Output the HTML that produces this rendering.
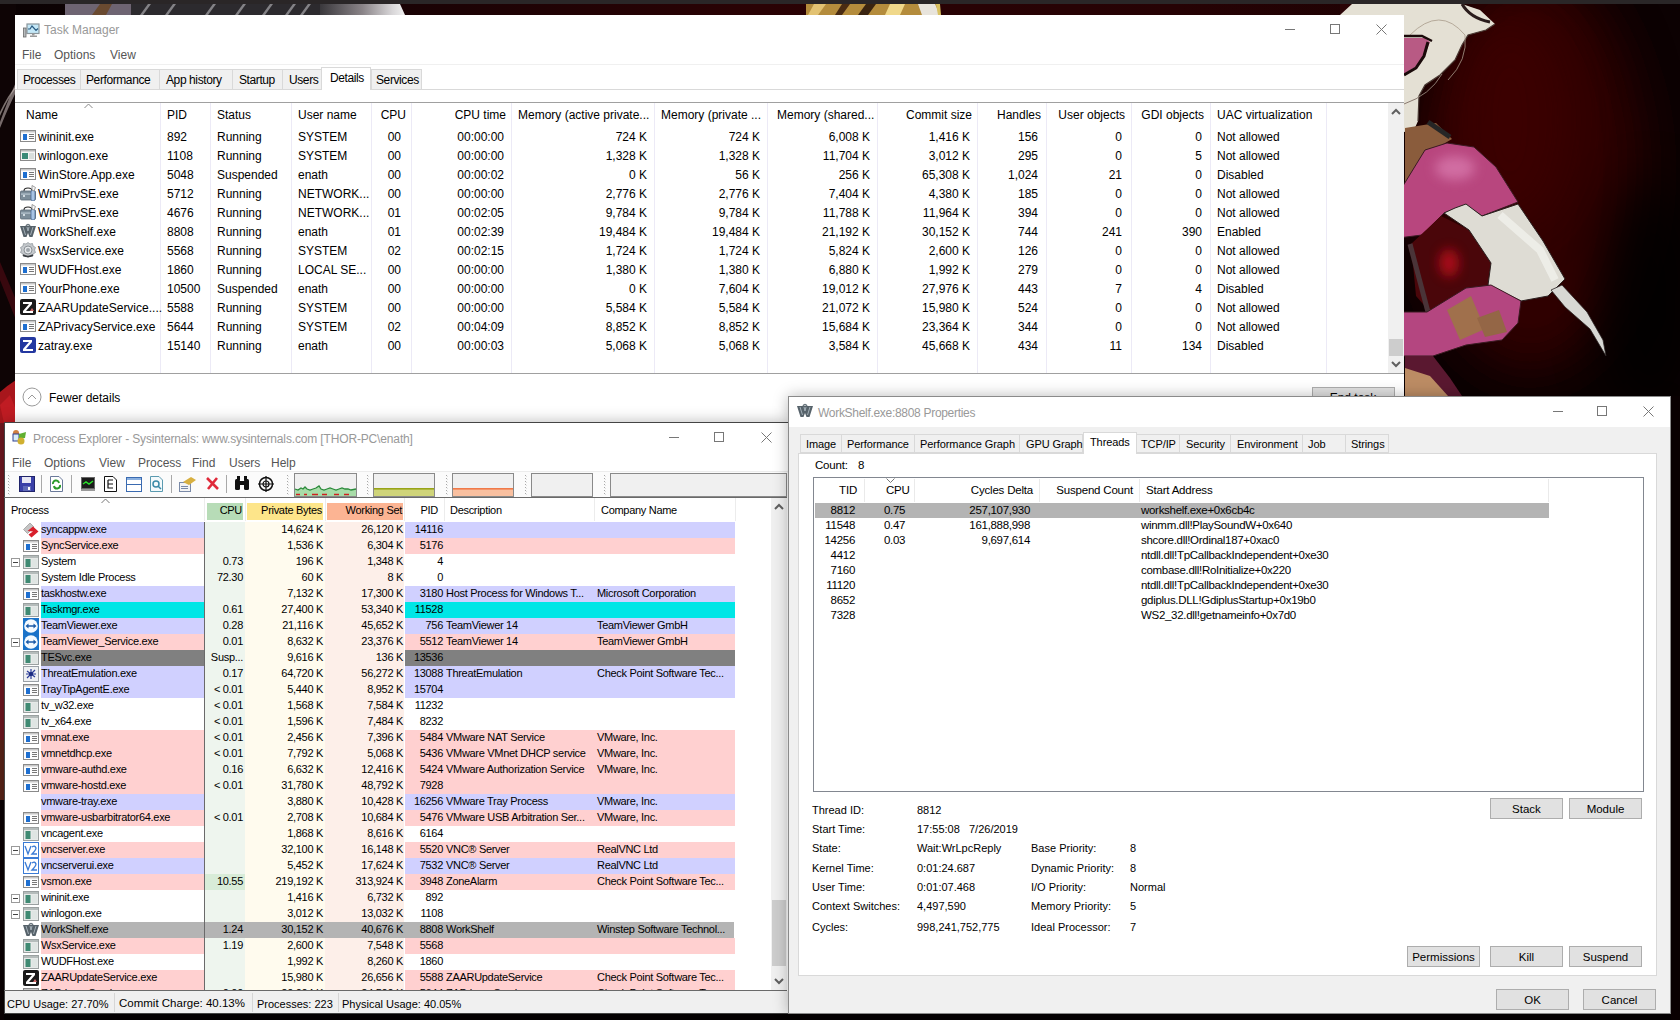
<!DOCTYPE html>
<html><head><meta charset="utf-8"><style>
html,body{margin:0;padding:0;}
body{width:1680px;height:1020px;overflow:hidden;position:relative;background:#080103;font-family:"Liberation Sans", sans-serif;}
.t{position:absolute;white-space:pre;line-height:1;font-family:"Liberation Sans", sans-serif;}
.r{position:absolute;}
</style></head><body>
<svg class="r" style="left:0px;top:0px;" width="1680" height="1020" viewBox="0 0 1680 1020"><defs><radialGradient id="rg1" cx="1500" cy="230" r="260" gradientUnits="userSpaceOnUse"><stop offset="0" stop-color="#3a0608"/><stop offset="0.6" stop-color="#1e0204"/><stop offset="1" stop-color="#0a0001"/></radialGradient><linearGradient id="lg_top" x1="0" y1="0" x2="1680" y2="0" gradientUnits="userSpaceOnUse"><stop offset="0" stop-color="#0a0203"/><stop offset="0.25" stop-color="#1a0204"/><stop offset="0.45" stop-color="#2a0204"/><stop offset="0.7" stop-color="#260204"/><stop offset="1" stop-color="#140102"/></linearGradient><linearGradient id="lg_left" x1="0" y1="0" x2="0" y2="1020" gradientUnits="userSpaceOnUse"><stop offset="0" stop-color="#0a0203"/><stop offset="0.3" stop-color="#0c0304"/><stop offset="0.33" stop-color="#1a0a0c"/><stop offset="0.35" stop-color="#0c0304"/><stop offset="0.62" stop-color="#1a0406"/><stop offset="0.66" stop-color="#3a0a0c"/><stop offset="0.72" stop-color="#7a1418"/><stop offset="0.8" stop-color="#400808"/><stop offset="1" stop-color="#100203"/></linearGradient><linearGradient id="lg_blade" x1="0" y1="0" x2="1" y2="1"><stop offset="0" stop-color="#f2f2f0"/><stop offset="1" stop-color="#9a9a98"/></linearGradient><filter id="blur20" x="-50%" y="-50%" width="200%" height="200%"><feGaussianBlur stdDeviation="25"/></filter><filter id="blur6" x="-50%" y="-50%" width="200%" height="200%"><feGaussianBlur stdDeviation="6"/></filter></defs><rect x="0" y="0" width="1680" height="1020" fill="#080103"/><rect x="0" y="0" width="1680" height="15" fill="url(#lg_top)"/><rect x="0" y="0" width="16" height="1020" fill="#0e0405"/><path d="M0 122 Q8 100 16 82 L16 92 Q8 108 0 128 Z" fill="#9a8c8c" opacity="0.75"/><path d="M0 112 Q8 95 16 86 L16 88 Q8 98 0 116 Z" fill="#c8bcb8" opacity="0.6"/><path d="M0 262 L16 300 L16 320 L0 280 Z" fill="#4a0a12" opacity="0.7"/><path d="M0 392 Q8 385 16 380 L16 423 L0 423 Z" fill="#a8161c"/><path d="M0 405 L10 395 L16 410 L16 423 L4 423 Z" fill="#d02228" opacity="0.6"/><defs><linearGradient id="silv" x1="0" y1="0" x2="1" y2="0"><stop offset="0" stop-color="#3a383c"/><stop offset="0.5" stop-color="#8a8488"/><stop offset="0.85" stop-color="#d8d6d8"/><stop offset="1" stop-color="#f0f0f0"/></linearGradient></defs><rect x="65" y="4" width="66" height="11" fill="#6e6472"/><path d="M92 15 L100 4 L112 4 L106 15 Z" fill="#6a4a30"/><rect x="131" y="4" width="190" height="11" fill="#2c2a2e"/><path d="M140 15 L148 4 L151 4 L143 15 Z" fill="#9a989c" opacity="0.8"/><path d="M165 15 L173 4 L176 4 L168 15 Z" fill="#9a989c" opacity="0.8"/><path d="M205 15 L213 4 L216 4 L208 15 Z" fill="#9a989c" opacity="0.8"/><path d="M235 15 L243 4 L246 4 L238 15 Z" fill="#9a989c" opacity="0.8"/><path d="M262 15 L270 4 L273 4 L265 15 Z" fill="#9a989c" opacity="0.8"/><path d="M285 15 L293 4 L296 4 L288 15 Z" fill="#9a989c" opacity="0.8"/><path d="M300 15 L308 4 L311 4 L303 15 Z" fill="#9a989c" opacity="0.8"/><path d="M320 4 L400 4 L405 15 L320 15 Z" fill="url(#silv)"/><rect x="806" y="4" width="134" height="11" fill="#b48c3c"/><path d="M808 15 L814 4 L826 4 L818 15 Z" fill="#e2c272"/><path d="M835 15 L842 4 L850 4 L842 15 Z" fill="#4a2c12"/><path d="M858 15 L866 4 L876 4 L868 15 Z" fill="#3a2410"/><path d="M885 15 L890 4 L905 4 L900 15 Z" fill="#f0d88a"/><path d="M918 4 L935 4 L940 15 L922 15 Z" fill="#e8e4dc"/><path d="M936 4 L940 4 L941 15 L938 15 Z" fill="#d8c060"/><rect x="1404" y="4" width="276" height="1016" fill="#0c0102"/><ellipse cx="1530" cy="170" rx="110" ry="200" fill="#320405" opacity="0.95" filter="url(#blur20)"/><ellipse cx="1510" cy="120" rx="60" ry="110" fill="#420506" opacity="0.6" filter="url(#blur20)"/><ellipse cx="1650" cy="300" rx="50" ry="120" fill="#050001" opacity="0.8" filter="url(#blur20)"/><rect x="1340" y="4" width="64" height="11" fill="#2a0406"/><path d="M1340 15 L1352 4 L1462 4 L1480 10 L1495 24 L1486 30 L1468 35 L1462 45 L1455 60 L1440 75 L1425 85 L1419 96 L1418 121 L1414 130 L1404 132 L1404 15 Z" fill="#e4e0d4"/><path d="M1462 4 Q1470 18 1490 22" stroke="#2a1c1c" stroke-width="3" fill="none"/><path d="M1495 24 L1486 30 L1468 35 L1462 45 L1455 60 L1440 75 L1425 85 L1419 96 L1418 121" stroke="#4a3a34" stroke-width="1.2" fill="none"/><path d="M1404 104 Q1430 95 1442 74" stroke="#8a7a70" stroke-width="1" fill="none"/><path d="M1410 35 Q1440 5 1465 35 Q1468 60 1448 80" stroke="#a89a8a" stroke-width="0.8" fill="none"/><path d="M1404 38 L1425 38 L1430 42 L1426 52 L1420 64 L1404 74 Z" fill="#b85a84"/><path d="M1404 36 L1422 36 L1432 41" stroke="#1a0a0a" stroke-width="2.5" fill="none"/><path d="M1428 42 L1424 56 L1416 68 L1404 75" stroke="#1a0a0a" stroke-width="3" fill="none"/><path d="M1405 128 L1436 123 L1452 139 L1433 150 L1416 172 L1405 191 Z" fill="#8a5c3c"/><path d="M1428 122 L1450 137" stroke="#262626" stroke-width="5"/><path d="M1398 194 L1425 150 L1447 143 L1474 147 L1496 167 L1518 202 L1482 216 L1466 205 L1444 213 L1422 235 L1398 238 Z" fill="#b8467e" stroke="#3a1a22" stroke-width="1"/><ellipse cx="1455" cy="168" rx="20" ry="12" fill="#d878ac" opacity="0.8" filter="url(#blur6)"/><path d="M1411 244 L1441 216 L1469 230 L1491 263 L1488 285 L1466 290 L1430 312 L1416 296 Z" fill="#4a060a"/><ellipse cx="1449" cy="263" rx="10" ry="14" fill="#c0101a" opacity="0.8" filter="url(#blur6)"/><path d="M1410 244 L1428 312" stroke="#4a3438" stroke-width="5"/><path d="M1455 208 L1466 204 L1482 216 L1518 204 L1543 241 L1565 279 L1548 296 L1521 301 L1488 285 L1491 263 L1469 230 L1444 213 Z" fill="#dedcd4" stroke="#2a2020" stroke-width="1"/><path d="M1500 215 L1540 250 L1555 280" stroke="#f4f4f0" stroke-width="8" fill="none" opacity="0.7"/><path d="M1398 312 L1427 312 L1466 288 L1491 285 L1521 301 L1518 323 L1502 340 L1466 345 L1433 356 L1398 356 Z" fill="#b44680" stroke="#3a1a22" stroke-width="1"/><path d="M1447 310 L1471 296 L1485 329 L1460 340 Z" fill="#a0704c"/><path d="M1477 318 L1499 310 L1507 332 L1485 337 Z" fill="#946646"/><path d="M1551 290 L1562 285 L1587 312 L1603 340 L1606 356 L1590 329 L1565 307 Z" fill="#d8d8d4" stroke="#2a2222" stroke-width="0.8"/><path d="M1405 356 L1433 356 L1450 378 L1462 396 L1405 396 Z" fill="#5a1830"/><path d="M1405 368 L1430 376 L1448 396 L1405 396 Z" fill="#bc8c64"/><rect x="0" y="0" width="1680" height="4" fill="#2a2627"/><rect x="0" y="1014" width="1680" height="6" fill="#050102"/><rect x="1671" y="396" width="9" height="624" fill="#0a0102"/><rect x="0" y="423" width="4" height="597" fill="#0a0203"/><rect x="0" y="423" width="4" height="320" fill="#701820"/><rect x="0" y="740" width="4" height="60" fill="#5a2418"/></svg><div class="r" style="left:15px;top:15px;width:1389px;height:408px;background:#fff;"></div><svg class="r" style="left:22px;top:22px;" width="18" height="16" viewBox="0 0 18 16"><rect x="5" y="2" width="12" height="9.5" fill="#c4e8f8" stroke="#8a969c" stroke-width="1.2"/><path d="M6 7 L8 7 L10 4 L14 8.5 L16 6.5" stroke="#2a5a80" stroke-width="1.2" fill="none"/><rect x="10" y="11.5" width="2.5" height="2" fill="#9a9a9a"/><rect x="8" y="13.5" width="7" height="1.5" fill="#9a9a9a"/><rect x="1.5" y="6" width="2.5" height="9" fill="#b8bcbe" stroke="#6a6a6a" stroke-width="0.8"/></svg><div class="t" style="left:44px;top:24px;font-size:12px;color:#999;">Task Manager</div><div class="r" style="left:1285px;top:29px;width:10px;height:1px;background:#777;"></div><div class="r" style="left:1330px;top:24px;width:10px;height:10px;border:1px solid #777;box-sizing:border-box;"></div><svg class="r" style="left:1376px;top:24px;" width="11" height="11" viewBox="0 0 11 11"><path d="M0.5 0.5 L10.5 10.5 M10.5 0.5 L0.5 10.5" stroke="#777" stroke-width="1"/></svg><div class="t" style="left:22px;top:49px;font-size:12px;color:#555;">File</div><div class="t" style="left:54px;top:49px;font-size:12px;color:#555;">Options</div><div class="t" style="left:110px;top:49px;font-size:12px;color:#555;">View</div><div class="r" style="left:15px;top:64px;width:1389px;height:1px;background:#f0f0f0;"></div><div class="r" style="left:15px;top:89px;width:1389px;height:1px;background:#d9d9d9;"></div><div class="r" style="left:17px;top:69px;width:64px;height:21px;background:#f0f0f0;border:1px solid #d9d9d9;box-sizing:border-box;"></div><div class="t" style="left:23px;top:74px;font-size:12px;color:#000;letter-spacing:-0.4px;">Processes</div><div class="r" style="left:80px;top:69px;width:80px;height:21px;background:#f0f0f0;border:1px solid #d9d9d9;box-sizing:border-box;"></div><div class="t" style="left:86px;top:74px;font-size:12px;color:#000;letter-spacing:-0.4px;">Performance</div><div class="r" style="left:159px;top:69px;width:74px;height:21px;background:#f0f0f0;border:1px solid #d9d9d9;box-sizing:border-box;"></div><div class="t" style="left:166px;top:74px;font-size:12px;color:#000;letter-spacing:-0.4px;">App history</div><div class="r" style="left:232px;top:69px;width:51px;height:21px;background:#f0f0f0;border:1px solid #d9d9d9;box-sizing:border-box;"></div><div class="t" style="left:239px;top:74px;font-size:12px;color:#000;letter-spacing:-0.4px;">Startup</div><div class="r" style="left:282px;top:69px;width:40px;height:21px;background:#f0f0f0;border:1px solid #d9d9d9;box-sizing:border-box;"></div><div class="t" style="left:289px;top:74px;font-size:12px;color:#000;letter-spacing:-0.4px;">Users</div><div class="r" style="left:321px;top:67px;width:50px;height:23px;background:#fff;border:1px solid #d9d9d9;box-sizing:border-box;border-bottom:none;"></div><div class="t" style="left:330px;top:72px;font-size:12px;color:#000;letter-spacing:-0.4px;">Details</div><div class="r" style="left:371px;top:69px;width:51px;height:21px;background:#f0f0f0;border:1px solid #d9d9d9;box-sizing:border-box;"></div><div class="t" style="left:376px;top:74px;font-size:12px;color:#000;letter-spacing:-0.4px;">Services</div><div class="r" style="left:15px;top:102px;width:1389px;height:1px;background:#a0a0a0;"></div><div class="r" style="left:160px;top:103px;width:1px;height:271px;background:#eceaf6;"></div><div class="r" style="left:210px;top:103px;width:1px;height:271px;background:#eceaf6;"></div><div class="r" style="left:291px;top:103px;width:1px;height:271px;background:#eceaf6;"></div><div class="r" style="left:371px;top:103px;width:1px;height:271px;background:#eceaf6;"></div><div class="r" style="left:411px;top:103px;width:1px;height:271px;background:#eceaf6;"></div><div class="r" style="left:511px;top:103px;width:1px;height:271px;background:#eceaf6;"></div><div class="r" style="left:654px;top:103px;width:1px;height:271px;background:#eceaf6;"></div><div class="r" style="left:767px;top:103px;width:1px;height:271px;background:#eceaf6;"></div><div class="r" style="left:877px;top:103px;width:1px;height:271px;background:#eceaf6;"></div><div class="r" style="left:977px;top:103px;width:1px;height:271px;background:#eceaf6;"></div><div class="r" style="left:1046px;top:103px;width:1px;height:271px;background:#eceaf6;"></div><div class="r" style="left:1131px;top:103px;width:1px;height:271px;background:#eceaf6;"></div><div class="r" style="left:1210px;top:103px;width:1px;height:271px;background:#eceaf6;"></div><div class="r" style="left:1326px;top:103px;width:1px;height:271px;background:#eceaf6;"></div><svg class="r" style="left:84px;top:103px;" width="9" height="6" viewBox="0 0 9 6"><path d="M0.5 5 L4.5 1 L8.5 5" stroke="#888" fill="none"/></svg><div class="t" style="left:26px;top:109px;font-size:12px;color:#000;">Name</div><div class="t" style="left:167px;top:109px;font-size:12px;color:#000;">PID</div><div class="t" style="left:217px;top:109px;font-size:12px;color:#000;">Status</div><div class="t" style="left:298px;top:109px;font-size:12px;color:#000;">User name</div><div class="t" style="left:6px;width:400px;text-align:right;top:109px;font-size:12px;color:#000;">CPU</div><div class="t" style="left:106px;width:400px;text-align:right;top:109px;font-size:12px;color:#000;">CPU time</div><div class="t" style="left:518px;top:109px;font-size:12px;color:#000;">Memory (active private...</div><div class="t" style="left:661px;top:109px;font-size:12px;color:#000;">Memory (private ...</div><div class="t" style="left:777px;top:109px;font-size:12px;color:#000;">Memory (shared...</div><div class="t" style="left:572px;width:400px;text-align:right;top:109px;font-size:12px;color:#000;">Commit size</div><div class="t" style="left:641px;width:400px;text-align:right;top:109px;font-size:12px;color:#000;">Handles</div><div class="t" style="left:725px;width:400px;text-align:right;top:109px;font-size:12px;color:#000;">User objects</div><div class="t" style="left:804px;width:400px;text-align:right;top:109px;font-size:12px;color:#000;">GDI objects</div><div class="t" style="left:1217px;top:109px;font-size:12px;color:#000;">UAC virtualization</div><svg class="r" style="left:20px;top:128px;" width="16" height="16" viewBox="0 0 16 16"><rect x="0.5" y="2.5" width="15" height="11" fill="#fdfdfd" stroke="#8a8a8a"/><rect x="1" y="3" width="14" height="1.5" fill="#c8c8c8"/><rect x="3" y="6" width="4" height="6" fill="#1e6fd0"/><rect x="9" y="6" width="5" height="1" fill="#777"/><rect x="9" y="8" width="5" height="1" fill="#777"/><rect x="9" y="10" width="5" height="1" fill="#777"/></svg><div class="t" style="left:38px;top:131px;font-size:12px;color:#000;">wininit.exe</div><div class="t" style="left:167px;top:131px;font-size:12px;color:#000;">892</div><div class="t" style="left:217px;top:131px;font-size:12px;color:#000;">Running</div><div class="t" style="left:298px;top:131px;font-size:12px;color:#000;">SYSTEM</div><div class="t" style="left:1px;width:400px;text-align:right;top:131px;font-size:12px;color:#000;">00</div><div class="t" style="left:104px;width:400px;text-align:right;top:131px;font-size:12px;color:#000;">00:00:00</div><div class="t" style="left:247px;width:400px;text-align:right;top:131px;font-size:12px;color:#000;">724 K</div><div class="t" style="left:360px;width:400px;text-align:right;top:131px;font-size:12px;color:#000;">724 K</div><div class="t" style="left:470px;width:400px;text-align:right;top:131px;font-size:12px;color:#000;">6,008 K</div><div class="t" style="left:570px;width:400px;text-align:right;top:131px;font-size:12px;color:#000;">1,416 K</div><div class="t" style="left:638px;width:400px;text-align:right;top:131px;font-size:12px;color:#000;">156</div><div class="t" style="left:722px;width:400px;text-align:right;top:131px;font-size:12px;color:#000;">0</div><div class="t" style="left:802px;width:400px;text-align:right;top:131px;font-size:12px;color:#000;">0</div><div class="t" style="left:1217px;top:131px;font-size:12px;color:#000;">Not allowed</div><svg class="r" style="left:20px;top:147px;" width="16" height="16" viewBox="0 0 16 16"><rect x="0.5" y="2.5" width="15" height="11" fill="#f4f4f4" stroke="#8a8a8a"/><rect x="1" y="3" width="14" height="1.5" fill="#b8b8b8"/><rect x="2" y="6" width="6" height="6" fill="#3b8a78"/><rect x="9" y="6" width="5" height="6" fill="#d8dedc"/></svg><div class="t" style="left:38px;top:150px;font-size:12px;color:#000;">winlogon.exe</div><div class="t" style="left:167px;top:150px;font-size:12px;color:#000;">1108</div><div class="t" style="left:217px;top:150px;font-size:12px;color:#000;">Running</div><div class="t" style="left:298px;top:150px;font-size:12px;color:#000;">SYSTEM</div><div class="t" style="left:1px;width:400px;text-align:right;top:150px;font-size:12px;color:#000;">00</div><div class="t" style="left:104px;width:400px;text-align:right;top:150px;font-size:12px;color:#000;">00:00:00</div><div class="t" style="left:247px;width:400px;text-align:right;top:150px;font-size:12px;color:#000;">1,328 K</div><div class="t" style="left:360px;width:400px;text-align:right;top:150px;font-size:12px;color:#000;">1,328 K</div><div class="t" style="left:470px;width:400px;text-align:right;top:150px;font-size:12px;color:#000;">11,704 K</div><div class="t" style="left:570px;width:400px;text-align:right;top:150px;font-size:12px;color:#000;">3,012 K</div><div class="t" style="left:638px;width:400px;text-align:right;top:150px;font-size:12px;color:#000;">295</div><div class="t" style="left:722px;width:400px;text-align:right;top:150px;font-size:12px;color:#000;">0</div><div class="t" style="left:802px;width:400px;text-align:right;top:150px;font-size:12px;color:#000;">5</div><div class="t" style="left:1217px;top:150px;font-size:12px;color:#000;">Not allowed</div><svg class="r" style="left:20px;top:166px;" width="16" height="16" viewBox="0 0 16 16"><rect x="0.5" y="2.5" width="15" height="11" fill="#fdfdfd" stroke="#8a8a8a"/><rect x="1" y="3" width="14" height="1.5" fill="#c8c8c8"/><rect x="3" y="6" width="4" height="6" fill="#1e6fd0"/><rect x="9" y="6" width="5" height="1" fill="#777"/><rect x="9" y="8" width="5" height="1" fill="#777"/><rect x="9" y="10" width="5" height="1" fill="#777"/></svg><div class="t" style="left:38px;top:169px;font-size:12px;color:#000;">WinStore.App.exe</div><div class="t" style="left:167px;top:169px;font-size:12px;color:#000;">5048</div><div class="t" style="left:217px;top:169px;font-size:12px;color:#000;">Suspended</div><div class="t" style="left:298px;top:169px;font-size:12px;color:#000;">enath</div><div class="t" style="left:1px;width:400px;text-align:right;top:169px;font-size:12px;color:#000;">00</div><div class="t" style="left:104px;width:400px;text-align:right;top:169px;font-size:12px;color:#000;">00:00:02</div><div class="t" style="left:247px;width:400px;text-align:right;top:169px;font-size:12px;color:#000;">0 K</div><div class="t" style="left:360px;width:400px;text-align:right;top:169px;font-size:12px;color:#000;">56 K</div><div class="t" style="left:470px;width:400px;text-align:right;top:169px;font-size:12px;color:#000;">256 K</div><div class="t" style="left:570px;width:400px;text-align:right;top:169px;font-size:12px;color:#000;">65,308 K</div><div class="t" style="left:638px;width:400px;text-align:right;top:169px;font-size:12px;color:#000;">1,024</div><div class="t" style="left:722px;width:400px;text-align:right;top:169px;font-size:12px;color:#000;">21</div><div class="t" style="left:802px;width:400px;text-align:right;top:169px;font-size:12px;color:#000;">0</div><div class="t" style="left:1217px;top:169px;font-size:12px;color:#000;">Disabled</div><svg class="r" style="left:20px;top:185px;" width="16" height="16" viewBox="0 0 16 16"><path d="M4 6 Q4 3 8 3 Q12 3 12 6" stroke="#2a2a2a" stroke-width="1.2" fill="none"/><rect x="0.5" y="6" width="15" height="9" rx="1" fill="#7d8e9a" stroke="#5a6a76" stroke-width="0.8"/><rect x="1" y="8.5" width="14" height="1.2" fill="#b8c6d0"/><rect x="3" y="10" width="2" height="2" fill="#d0dae0"/><rect x="11" y="5" width="4" height="11" rx="2" fill="#a8c4e4" stroke="#4a6a96" stroke-width="0.8"/><path d="M12 0.5 L15.5 2.5 L14 6 L12 5 Z" fill="#f4f4f4" stroke="#8a8a8a" stroke-width="0.8"/></svg><div class="t" style="left:38px;top:188px;font-size:12px;color:#000;">WmiPrvSE.exe</div><div class="t" style="left:167px;top:188px;font-size:12px;color:#000;">5712</div><div class="t" style="left:217px;top:188px;font-size:12px;color:#000;">Running</div><div class="t" style="left:298px;top:188px;font-size:12px;color:#000;">NETWORK...</div><div class="t" style="left:1px;width:400px;text-align:right;top:188px;font-size:12px;color:#000;">00</div><div class="t" style="left:104px;width:400px;text-align:right;top:188px;font-size:12px;color:#000;">00:00:00</div><div class="t" style="left:247px;width:400px;text-align:right;top:188px;font-size:12px;color:#000;">2,776 K</div><div class="t" style="left:360px;width:400px;text-align:right;top:188px;font-size:12px;color:#000;">2,776 K</div><div class="t" style="left:470px;width:400px;text-align:right;top:188px;font-size:12px;color:#000;">7,404 K</div><div class="t" style="left:570px;width:400px;text-align:right;top:188px;font-size:12px;color:#000;">4,380 K</div><div class="t" style="left:638px;width:400px;text-align:right;top:188px;font-size:12px;color:#000;">185</div><div class="t" style="left:722px;width:400px;text-align:right;top:188px;font-size:12px;color:#000;">0</div><div class="t" style="left:802px;width:400px;text-align:right;top:188px;font-size:12px;color:#000;">0</div><div class="t" style="left:1217px;top:188px;font-size:12px;color:#000;">Not allowed</div><svg class="r" style="left:20px;top:204px;" width="16" height="16" viewBox="0 0 16 16"><path d="M4 6 Q4 3 8 3 Q12 3 12 6" stroke="#2a2a2a" stroke-width="1.2" fill="none"/><rect x="0.5" y="6" width="15" height="9" rx="1" fill="#7d8e9a" stroke="#5a6a76" stroke-width="0.8"/><rect x="1" y="8.5" width="14" height="1.2" fill="#b8c6d0"/><rect x="3" y="10" width="2" height="2" fill="#d0dae0"/><rect x="11" y="5" width="4" height="11" rx="2" fill="#a8c4e4" stroke="#4a6a96" stroke-width="0.8"/><path d="M12 0.5 L15.5 2.5 L14 6 L12 5 Z" fill="#f4f4f4" stroke="#8a8a8a" stroke-width="0.8"/></svg><div class="t" style="left:38px;top:207px;font-size:12px;color:#000;">WmiPrvSE.exe</div><div class="t" style="left:167px;top:207px;font-size:12px;color:#000;">4676</div><div class="t" style="left:217px;top:207px;font-size:12px;color:#000;">Running</div><div class="t" style="left:298px;top:207px;font-size:12px;color:#000;">NETWORK...</div><div class="t" style="left:1px;width:400px;text-align:right;top:207px;font-size:12px;color:#000;">01</div><div class="t" style="left:104px;width:400px;text-align:right;top:207px;font-size:12px;color:#000;">00:02:05</div><div class="t" style="left:247px;width:400px;text-align:right;top:207px;font-size:12px;color:#000;">9,784 K</div><div class="t" style="left:360px;width:400px;text-align:right;top:207px;font-size:12px;color:#000;">9,784 K</div><div class="t" style="left:470px;width:400px;text-align:right;top:207px;font-size:12px;color:#000;">11,788 K</div><div class="t" style="left:570px;width:400px;text-align:right;top:207px;font-size:12px;color:#000;">11,964 K</div><div class="t" style="left:638px;width:400px;text-align:right;top:207px;font-size:12px;color:#000;">394</div><div class="t" style="left:722px;width:400px;text-align:right;top:207px;font-size:12px;color:#000;">0</div><div class="t" style="left:802px;width:400px;text-align:right;top:207px;font-size:12px;color:#000;">0</div><div class="t" style="left:1217px;top:207px;font-size:12px;color:#000;">Not allowed</div><svg class="r" style="left:20px;top:223px;" width="16" height="16" viewBox="0 0 16 16"><path d="M0 3 L16 3 L12.5 14 L9.5 14 L8 10 L6.5 14 L3.5 14 Z" fill="#56626a"/><path d="M3 4 L5.5 12 M13 4 L10.5 12 M7 4 L8 8 L9 4" stroke="#a4b0b8" stroke-width="1" fill="none"/><path d="M6 3 Q8 0 10 3" stroke="#6a767e" stroke-width="1.5" fill="none"/></svg><div class="t" style="left:38px;top:226px;font-size:12px;color:#000;">WorkShelf.exe</div><div class="t" style="left:167px;top:226px;font-size:12px;color:#000;">8808</div><div class="t" style="left:217px;top:226px;font-size:12px;color:#000;">Running</div><div class="t" style="left:298px;top:226px;font-size:12px;color:#000;">enath</div><div class="t" style="left:1px;width:400px;text-align:right;top:226px;font-size:12px;color:#000;">01</div><div class="t" style="left:104px;width:400px;text-align:right;top:226px;font-size:12px;color:#000;">00:02:39</div><div class="t" style="left:247px;width:400px;text-align:right;top:226px;font-size:12px;color:#000;">19,484 K</div><div class="t" style="left:360px;width:400px;text-align:right;top:226px;font-size:12px;color:#000;">19,484 K</div><div class="t" style="left:470px;width:400px;text-align:right;top:226px;font-size:12px;color:#000;">21,192 K</div><div class="t" style="left:570px;width:400px;text-align:right;top:226px;font-size:12px;color:#000;">30,152 K</div><div class="t" style="left:638px;width:400px;text-align:right;top:226px;font-size:12px;color:#000;">744</div><div class="t" style="left:722px;width:400px;text-align:right;top:226px;font-size:12px;color:#000;">241</div><div class="t" style="left:802px;width:400px;text-align:right;top:226px;font-size:12px;color:#000;">390</div><div class="t" style="left:1217px;top:226px;font-size:12px;color:#000;">Enabled</div><svg class="r" style="left:20px;top:242px;" width="16" height="16" viewBox="0 0 16 16"><path d="M8 0.5 L10 2 L12.5 1.5 L13 4 L15.5 5.5 L14.5 8 L15.5 10.5 L13 12 L12.5 14.5 L10 14 L8 15.5 L6 14 L3.5 14.5 L3 12 L0.5 10.5 L1.5 8 L0.5 5.5 L3 4 L3.5 1.5 L6 2 Z" fill="#c4c8cc" stroke="#8a9096" stroke-width="0.7"/><circle cx="8" cy="8" r="4" fill="#e4e7ea" stroke="#8d9398"/><circle cx="8" cy="8" r="2" fill="#a0a6ac"/><path d="M3 13 Q8 16 13 13" stroke="#3a3e42" stroke-width="1.5" fill="none"/></svg><div class="t" style="left:38px;top:245px;font-size:12px;color:#000;">WsxService.exe</div><div class="t" style="left:167px;top:245px;font-size:12px;color:#000;">5568</div><div class="t" style="left:217px;top:245px;font-size:12px;color:#000;">Running</div><div class="t" style="left:298px;top:245px;font-size:12px;color:#000;">SYSTEM</div><div class="t" style="left:1px;width:400px;text-align:right;top:245px;font-size:12px;color:#000;">02</div><div class="t" style="left:104px;width:400px;text-align:right;top:245px;font-size:12px;color:#000;">00:02:15</div><div class="t" style="left:247px;width:400px;text-align:right;top:245px;font-size:12px;color:#000;">1,724 K</div><div class="t" style="left:360px;width:400px;text-align:right;top:245px;font-size:12px;color:#000;">1,724 K</div><div class="t" style="left:470px;width:400px;text-align:right;top:245px;font-size:12px;color:#000;">5,824 K</div><div class="t" style="left:570px;width:400px;text-align:right;top:245px;font-size:12px;color:#000;">2,600 K</div><div class="t" style="left:638px;width:400px;text-align:right;top:245px;font-size:12px;color:#000;">126</div><div class="t" style="left:722px;width:400px;text-align:right;top:245px;font-size:12px;color:#000;">0</div><div class="t" style="left:802px;width:400px;text-align:right;top:245px;font-size:12px;color:#000;">0</div><div class="t" style="left:1217px;top:245px;font-size:12px;color:#000;">Not allowed</div><svg class="r" style="left:20px;top:261px;" width="16" height="16" viewBox="0 0 16 16"><rect x="0.5" y="2.5" width="15" height="11" fill="#fdfdfd" stroke="#8a8a8a"/><rect x="1" y="3" width="14" height="1.5" fill="#c8c8c8"/><rect x="3" y="6" width="4" height="6" fill="#1e6fd0"/><rect x="9" y="6" width="5" height="1" fill="#777"/><rect x="9" y="8" width="5" height="1" fill="#777"/><rect x="9" y="10" width="5" height="1" fill="#777"/></svg><div class="t" style="left:38px;top:264px;font-size:12px;color:#000;">WUDFHost.exe</div><div class="t" style="left:167px;top:264px;font-size:12px;color:#000;">1860</div><div class="t" style="left:217px;top:264px;font-size:12px;color:#000;">Running</div><div class="t" style="left:298px;top:264px;font-size:12px;color:#000;">LOCAL SE...</div><div class="t" style="left:1px;width:400px;text-align:right;top:264px;font-size:12px;color:#000;">00</div><div class="t" style="left:104px;width:400px;text-align:right;top:264px;font-size:12px;color:#000;">00:00:00</div><div class="t" style="left:247px;width:400px;text-align:right;top:264px;font-size:12px;color:#000;">1,380 K</div><div class="t" style="left:360px;width:400px;text-align:right;top:264px;font-size:12px;color:#000;">1,380 K</div><div class="t" style="left:470px;width:400px;text-align:right;top:264px;font-size:12px;color:#000;">6,880 K</div><div class="t" style="left:570px;width:400px;text-align:right;top:264px;font-size:12px;color:#000;">1,992 K</div><div class="t" style="left:638px;width:400px;text-align:right;top:264px;font-size:12px;color:#000;">279</div><div class="t" style="left:722px;width:400px;text-align:right;top:264px;font-size:12px;color:#000;">0</div><div class="t" style="left:802px;width:400px;text-align:right;top:264px;font-size:12px;color:#000;">0</div><div class="t" style="left:1217px;top:264px;font-size:12px;color:#000;">Not allowed</div><svg class="r" style="left:20px;top:280px;" width="16" height="16" viewBox="0 0 16 16"><rect x="0.5" y="2.5" width="15" height="11" fill="#fdfdfd" stroke="#8a8a8a"/><rect x="1" y="3" width="14" height="1.5" fill="#c8c8c8"/><rect x="3" y="6" width="4" height="6" fill="#1e6fd0"/><rect x="9" y="6" width="5" height="1" fill="#777"/><rect x="9" y="8" width="5" height="1" fill="#777"/><rect x="9" y="10" width="5" height="1" fill="#777"/></svg><div class="t" style="left:38px;top:283px;font-size:12px;color:#000;">YourPhone.exe</div><div class="t" style="left:167px;top:283px;font-size:12px;color:#000;">10500</div><div class="t" style="left:217px;top:283px;font-size:12px;color:#000;">Suspended</div><div class="t" style="left:298px;top:283px;font-size:12px;color:#000;">enath</div><div class="t" style="left:1px;width:400px;text-align:right;top:283px;font-size:12px;color:#000;">00</div><div class="t" style="left:104px;width:400px;text-align:right;top:283px;font-size:12px;color:#000;">00:00:00</div><div class="t" style="left:247px;width:400px;text-align:right;top:283px;font-size:12px;color:#000;">0 K</div><div class="t" style="left:360px;width:400px;text-align:right;top:283px;font-size:12px;color:#000;">7,604 K</div><div class="t" style="left:470px;width:400px;text-align:right;top:283px;font-size:12px;color:#000;">19,012 K</div><div class="t" style="left:570px;width:400px;text-align:right;top:283px;font-size:12px;color:#000;">27,976 K</div><div class="t" style="left:638px;width:400px;text-align:right;top:283px;font-size:12px;color:#000;">443</div><div class="t" style="left:722px;width:400px;text-align:right;top:283px;font-size:12px;color:#000;">7</div><div class="t" style="left:802px;width:400px;text-align:right;top:283px;font-size:12px;color:#000;">4</div><div class="t" style="left:1217px;top:283px;font-size:12px;color:#000;">Disabled</div><svg class="r" style="left:20px;top:299px;" width="16" height="16" viewBox="0 0 16 16"><rect x="0" y="0" width="16" height="16" rx="2" fill="#1a1a1a"/><path d="M3 3 H12 V5 L6 12 H13 V14 H3 V12 L9 5 H3 Z" fill="#fff"/><path d="M10 12 L12 9 L14 12 Z" fill="#c66"/></svg><div class="t" style="left:38px;top:302px;font-size:12px;color:#000;">ZAARUpdateService....</div><div class="t" style="left:167px;top:302px;font-size:12px;color:#000;">5588</div><div class="t" style="left:217px;top:302px;font-size:12px;color:#000;">Running</div><div class="t" style="left:298px;top:302px;font-size:12px;color:#000;">SYSTEM</div><div class="t" style="left:1px;width:400px;text-align:right;top:302px;font-size:12px;color:#000;">00</div><div class="t" style="left:104px;width:400px;text-align:right;top:302px;font-size:12px;color:#000;">00:00:00</div><div class="t" style="left:247px;width:400px;text-align:right;top:302px;font-size:12px;color:#000;">5,584 K</div><div class="t" style="left:360px;width:400px;text-align:right;top:302px;font-size:12px;color:#000;">5,584 K</div><div class="t" style="left:470px;width:400px;text-align:right;top:302px;font-size:12px;color:#000;">21,072 K</div><div class="t" style="left:570px;width:400px;text-align:right;top:302px;font-size:12px;color:#000;">15,980 K</div><div class="t" style="left:638px;width:400px;text-align:right;top:302px;font-size:12px;color:#000;">524</div><div class="t" style="left:722px;width:400px;text-align:right;top:302px;font-size:12px;color:#000;">0</div><div class="t" style="left:802px;width:400px;text-align:right;top:302px;font-size:12px;color:#000;">0</div><div class="t" style="left:1217px;top:302px;font-size:12px;color:#000;">Not allowed</div><svg class="r" style="left:20px;top:318px;" width="16" height="16" viewBox="0 0 16 16"><rect x="0.5" y="2.5" width="15" height="11" fill="#fdfdfd" stroke="#8a8a8a"/><rect x="1" y="3" width="14" height="1.5" fill="#c8c8c8"/><rect x="3" y="6" width="4" height="6" fill="#1e6fd0"/><rect x="9" y="6" width="5" height="1" fill="#777"/><rect x="9" y="8" width="5" height="1" fill="#777"/><rect x="9" y="10" width="5" height="1" fill="#777"/></svg><div class="t" style="left:38px;top:321px;font-size:12px;color:#000;">ZAPrivacyService.exe</div><div class="t" style="left:167px;top:321px;font-size:12px;color:#000;">5644</div><div class="t" style="left:217px;top:321px;font-size:12px;color:#000;">Running</div><div class="t" style="left:298px;top:321px;font-size:12px;color:#000;">SYSTEM</div><div class="t" style="left:1px;width:400px;text-align:right;top:321px;font-size:12px;color:#000;">02</div><div class="t" style="left:104px;width:400px;text-align:right;top:321px;font-size:12px;color:#000;">00:04:09</div><div class="t" style="left:247px;width:400px;text-align:right;top:321px;font-size:12px;color:#000;">8,852 K</div><div class="t" style="left:360px;width:400px;text-align:right;top:321px;font-size:12px;color:#000;">8,852 K</div><div class="t" style="left:470px;width:400px;text-align:right;top:321px;font-size:12px;color:#000;">15,684 K</div><div class="t" style="left:570px;width:400px;text-align:right;top:321px;font-size:12px;color:#000;">23,364 K</div><div class="t" style="left:638px;width:400px;text-align:right;top:321px;font-size:12px;color:#000;">344</div><div class="t" style="left:722px;width:400px;text-align:right;top:321px;font-size:12px;color:#000;">0</div><div class="t" style="left:802px;width:400px;text-align:right;top:321px;font-size:12px;color:#000;">0</div><div class="t" style="left:1217px;top:321px;font-size:12px;color:#000;">Not allowed</div><svg class="r" style="left:20px;top:337px;" width="16" height="16" viewBox="0 0 16 16"><rect x="0" y="0" width="16" height="16" rx="2" fill="#2438a0"/><path d="M3 3 H12 V5 L6 12 H13 V14 H3 V12 L9 5 H3 Z" fill="#fff"/></svg><div class="t" style="left:38px;top:340px;font-size:12px;color:#000;">zatray.exe</div><div class="t" style="left:167px;top:340px;font-size:12px;color:#000;">15140</div><div class="t" style="left:217px;top:340px;font-size:12px;color:#000;">Running</div><div class="t" style="left:298px;top:340px;font-size:12px;color:#000;">enath</div><div class="t" style="left:1px;width:400px;text-align:right;top:340px;font-size:12px;color:#000;">00</div><div class="t" style="left:104px;width:400px;text-align:right;top:340px;font-size:12px;color:#000;">00:00:03</div><div class="t" style="left:247px;width:400px;text-align:right;top:340px;font-size:12px;color:#000;">5,068 K</div><div class="t" style="left:360px;width:400px;text-align:right;top:340px;font-size:12px;color:#000;">5,068 K</div><div class="t" style="left:470px;width:400px;text-align:right;top:340px;font-size:12px;color:#000;">3,584 K</div><div class="t" style="left:570px;width:400px;text-align:right;top:340px;font-size:12px;color:#000;">45,668 K</div><div class="t" style="left:638px;width:400px;text-align:right;top:340px;font-size:12px;color:#000;">434</div><div class="t" style="left:722px;width:400px;text-align:right;top:340px;font-size:12px;color:#000;">11</div><div class="t" style="left:802px;width:400px;text-align:right;top:340px;font-size:12px;color:#000;">134</div><div class="t" style="left:1217px;top:340px;font-size:12px;color:#000;">Disabled</div><div class="r" style="left:1388px;top:103px;width:16px;height:271px;background:#f0f0f0;"></div><div class="r" style="left:1389px;top:339px;width:14px;height:17px;background:#cdcdcd;"></div><svg class="r" style="left:1391px;top:108px;" width="10" height="7" viewBox="0 0 10 7"><path d="M1 6 L5 2 L9 6" stroke="#606060" stroke-width="2" fill="none"/></svg><svg class="r" style="left:1391px;top:361px;" width="10" height="7" viewBox="0 0 10 7"><path d="M1 1 L5 5 L9 1" stroke="#606060" stroke-width="2" fill="none"/></svg><div class="r" style="left:15px;top:373px;width:1373px;height:1px;background:#a0a0a0;"></div><div class="r" style="left:1388px;top:373px;width:16px;height:1px;background:#a0a0a0;"></div><svg class="r" style="left:22px;top:387px;" width="20" height="20" viewBox="0 0 20 20"><circle cx="10" cy="10" r="9" fill="none" stroke="#9a9a9a"/><path d="M6 12 L10 8 L14 12" stroke="#9a9a9a" fill="none"/></svg><div class="t" style="left:49px;top:392px;font-size:12px;color:#000;">Fewer details</div><div class="r" style="left:1312px;top:387px;width:83px;height:30px;background:#e1e1e1;border:1px solid #adadad;box-sizing:border-box;"></div><div class="t" style="left:1313.0px;width:80px;text-align:center;top:392px;font-size:12px;color:#000;">End task</div><div class="r" style="left:4px;top:422px;width:785px;height:592px;background:#fff;border:1px solid #444;box-sizing:border-box;box-shadow:0 0 14px rgba(0,0,0,0.28);"></div><svg class="r" style="left:10px;top:429px;" width="18" height="16" viewBox="0 0 18 16"><circle cx="6" cy="4" r="3" fill="#d08040"/><rect x="3" y="5" width="6" height="7" fill="#d8ecf8" stroke="#304090" stroke-width="1"/><path d="M9 5 L16 3 L15 9 L9 10 Z" fill="#60b030"/><circle cx="11" cy="12" r="3.5" fill="#d0b030"/></svg><div class="t" style="left:33px;top:433px;font-size:12px;color:#999;letter-spacing:-0.15px;">Process Explorer - Sysinternals: www.sysinternals.com [THOR-PC\enath]</div><div class="r" style="left:669px;top:437px;width:10px;height:1px;background:#777;"></div><div class="r" style="left:714px;top:432px;width:10px;height:10px;border:1px solid #777;box-sizing:border-box;"></div><svg class="r" style="left:761px;top:432px;" width="11" height="11" viewBox="0 0 11 11"><path d="M0.5 0.5 L10.5 10.5 M10.5 0.5 L0.5 10.5" stroke="#777" stroke-width="1"/></svg><div class="t" style="left:12px;top:457px;font-size:12px;color:#555;">File</div><div class="t" style="left:44px;top:457px;font-size:12px;color:#555;">Options</div><div class="t" style="left:99px;top:457px;font-size:12px;color:#555;">View</div><div class="t" style="left:138px;top:457px;font-size:12px;color:#555;">Process</div><div class="t" style="left:192px;top:457px;font-size:12px;color:#555;">Find</div><div class="t" style="left:229px;top:457px;font-size:12px;color:#555;">Users</div><div class="t" style="left:271px;top:457px;font-size:12px;color:#555;">Help</div><div class="r" style="left:5px;top:471px;width:783px;height:26px;background:#fbfbfb;"></div><div class="r" style="left:5px;top:471px;width:783px;height:1px;background:#ececec;"></div><div class="r" style="left:8px;top:475px;width:1px;height:1px;background:#a8a8a8;"></div><div class="r" style="left:9px;top:476px;width:1px;height:1px;background:#e0e0e0;"></div><div class="r" style="left:8px;top:478px;width:1px;height:1px;background:#a8a8a8;"></div><div class="r" style="left:9px;top:479px;width:1px;height:1px;background:#e0e0e0;"></div><div class="r" style="left:8px;top:481px;width:1px;height:1px;background:#a8a8a8;"></div><div class="r" style="left:9px;top:482px;width:1px;height:1px;background:#e0e0e0;"></div><div class="r" style="left:8px;top:484px;width:1px;height:1px;background:#a8a8a8;"></div><div class="r" style="left:9px;top:485px;width:1px;height:1px;background:#e0e0e0;"></div><div class="r" style="left:8px;top:487px;width:1px;height:1px;background:#a8a8a8;"></div><div class="r" style="left:9px;top:488px;width:1px;height:1px;background:#e0e0e0;"></div><div class="r" style="left:8px;top:490px;width:1px;height:1px;background:#a8a8a8;"></div><div class="r" style="left:9px;top:491px;width:1px;height:1px;background:#e0e0e0;"></div><div class="r" style="left:8px;top:493px;width:1px;height:1px;background:#a8a8a8;"></div><div class="r" style="left:9px;top:494px;width:1px;height:1px;background:#e0e0e0;"></div><div class="r" style="left:287px;top:475px;width:1px;height:1px;background:#a8a8a8;"></div><div class="r" style="left:288px;top:476px;width:1px;height:1px;background:#e0e0e0;"></div><div class="r" style="left:287px;top:478px;width:1px;height:1px;background:#a8a8a8;"></div><div class="r" style="left:288px;top:479px;width:1px;height:1px;background:#e0e0e0;"></div><div class="r" style="left:287px;top:481px;width:1px;height:1px;background:#a8a8a8;"></div><div class="r" style="left:288px;top:482px;width:1px;height:1px;background:#e0e0e0;"></div><div class="r" style="left:287px;top:484px;width:1px;height:1px;background:#a8a8a8;"></div><div class="r" style="left:288px;top:485px;width:1px;height:1px;background:#e0e0e0;"></div><div class="r" style="left:287px;top:487px;width:1px;height:1px;background:#a8a8a8;"></div><div class="r" style="left:288px;top:488px;width:1px;height:1px;background:#e0e0e0;"></div><div class="r" style="left:287px;top:490px;width:1px;height:1px;background:#a8a8a8;"></div><div class="r" style="left:288px;top:491px;width:1px;height:1px;background:#e0e0e0;"></div><div class="r" style="left:287px;top:493px;width:1px;height:1px;background:#a8a8a8;"></div><div class="r" style="left:288px;top:494px;width:1px;height:1px;background:#e0e0e0;"></div><div class="r" style="left:367px;top:475px;width:1px;height:1px;background:#a8a8a8;"></div><div class="r" style="left:368px;top:476px;width:1px;height:1px;background:#e0e0e0;"></div><div class="r" style="left:367px;top:478px;width:1px;height:1px;background:#a8a8a8;"></div><div class="r" style="left:368px;top:479px;width:1px;height:1px;background:#e0e0e0;"></div><div class="r" style="left:367px;top:481px;width:1px;height:1px;background:#a8a8a8;"></div><div class="r" style="left:368px;top:482px;width:1px;height:1px;background:#e0e0e0;"></div><div class="r" style="left:367px;top:484px;width:1px;height:1px;background:#a8a8a8;"></div><div class="r" style="left:368px;top:485px;width:1px;height:1px;background:#e0e0e0;"></div><div class="r" style="left:367px;top:487px;width:1px;height:1px;background:#a8a8a8;"></div><div class="r" style="left:368px;top:488px;width:1px;height:1px;background:#e0e0e0;"></div><div class="r" style="left:367px;top:490px;width:1px;height:1px;background:#a8a8a8;"></div><div class="r" style="left:368px;top:491px;width:1px;height:1px;background:#e0e0e0;"></div><div class="r" style="left:367px;top:493px;width:1px;height:1px;background:#a8a8a8;"></div><div class="r" style="left:368px;top:494px;width:1px;height:1px;background:#e0e0e0;"></div><div class="r" style="left:446px;top:475px;width:1px;height:1px;background:#a8a8a8;"></div><div class="r" style="left:447px;top:476px;width:1px;height:1px;background:#e0e0e0;"></div><div class="r" style="left:446px;top:478px;width:1px;height:1px;background:#a8a8a8;"></div><div class="r" style="left:447px;top:479px;width:1px;height:1px;background:#e0e0e0;"></div><div class="r" style="left:446px;top:481px;width:1px;height:1px;background:#a8a8a8;"></div><div class="r" style="left:447px;top:482px;width:1px;height:1px;background:#e0e0e0;"></div><div class="r" style="left:446px;top:484px;width:1px;height:1px;background:#a8a8a8;"></div><div class="r" style="left:447px;top:485px;width:1px;height:1px;background:#e0e0e0;"></div><div class="r" style="left:446px;top:487px;width:1px;height:1px;background:#a8a8a8;"></div><div class="r" style="left:447px;top:488px;width:1px;height:1px;background:#e0e0e0;"></div><div class="r" style="left:446px;top:490px;width:1px;height:1px;background:#a8a8a8;"></div><div class="r" style="left:447px;top:491px;width:1px;height:1px;background:#e0e0e0;"></div><div class="r" style="left:446px;top:493px;width:1px;height:1px;background:#a8a8a8;"></div><div class="r" style="left:447px;top:494px;width:1px;height:1px;background:#e0e0e0;"></div><div class="r" style="left:525px;top:475px;width:1px;height:1px;background:#a8a8a8;"></div><div class="r" style="left:526px;top:476px;width:1px;height:1px;background:#e0e0e0;"></div><div class="r" style="left:525px;top:478px;width:1px;height:1px;background:#a8a8a8;"></div><div class="r" style="left:526px;top:479px;width:1px;height:1px;background:#e0e0e0;"></div><div class="r" style="left:525px;top:481px;width:1px;height:1px;background:#a8a8a8;"></div><div class="r" style="left:526px;top:482px;width:1px;height:1px;background:#e0e0e0;"></div><div class="r" style="left:525px;top:484px;width:1px;height:1px;background:#a8a8a8;"></div><div class="r" style="left:526px;top:485px;width:1px;height:1px;background:#e0e0e0;"></div><div class="r" style="left:525px;top:487px;width:1px;height:1px;background:#a8a8a8;"></div><div class="r" style="left:526px;top:488px;width:1px;height:1px;background:#e0e0e0;"></div><div class="r" style="left:525px;top:490px;width:1px;height:1px;background:#a8a8a8;"></div><div class="r" style="left:526px;top:491px;width:1px;height:1px;background:#e0e0e0;"></div><div class="r" style="left:525px;top:493px;width:1px;height:1px;background:#a8a8a8;"></div><div class="r" style="left:526px;top:494px;width:1px;height:1px;background:#e0e0e0;"></div><div class="r" style="left:604px;top:475px;width:1px;height:1px;background:#a8a8a8;"></div><div class="r" style="left:605px;top:476px;width:1px;height:1px;background:#e0e0e0;"></div><div class="r" style="left:604px;top:478px;width:1px;height:1px;background:#a8a8a8;"></div><div class="r" style="left:605px;top:479px;width:1px;height:1px;background:#e0e0e0;"></div><div class="r" style="left:604px;top:481px;width:1px;height:1px;background:#a8a8a8;"></div><div class="r" style="left:605px;top:482px;width:1px;height:1px;background:#e0e0e0;"></div><div class="r" style="left:604px;top:484px;width:1px;height:1px;background:#a8a8a8;"></div><div class="r" style="left:605px;top:485px;width:1px;height:1px;background:#e0e0e0;"></div><div class="r" style="left:604px;top:487px;width:1px;height:1px;background:#a8a8a8;"></div><div class="r" style="left:605px;top:488px;width:1px;height:1px;background:#e0e0e0;"></div><div class="r" style="left:604px;top:490px;width:1px;height:1px;background:#a8a8a8;"></div><div class="r" style="left:605px;top:491px;width:1px;height:1px;background:#e0e0e0;"></div><div class="r" style="left:604px;top:493px;width:1px;height:1px;background:#a8a8a8;"></div><div class="r" style="left:605px;top:494px;width:1px;height:1px;background:#e0e0e0;"></div><div class="r" style="left:41px;top:475px;width:1px;height:18px;background:#a8a8a8;"></div><div class="r" style="left:71px;top:475px;width:1px;height:18px;background:#a8a8a8;"></div><div class="r" style="left:171px;top:475px;width:1px;height:18px;background:#a8a8a8;"></div><div class="r" style="left:226px;top:475px;width:1px;height:18px;background:#a8a8a8;"></div><svg class="r" style="left:19px;top:476px;" width="16" height="16" viewBox="0 0 16 16"><rect x="0.5" y="0.5" width="15" height="15" fill="#3a40a8" stroke="#20246a"/><rect x="3" y="1" width="9" height="6" fill="#e8e8f4"/><rect x="4" y="10" width="8" height="5" fill="#606ab8"/><rect x="9" y="11" width="2" height="3" fill="#fff"/></svg><svg class="r" style="left:50px;top:476px;" width="13" height="16" viewBox="0 0 13 16"><path d="M0.5 0.5 H9 L12.5 4 V15.5 H0.5 Z" fill="#fff" stroke="#6a7a9a"/><path d="M3 8 A3 3 0 0 1 9 7" stroke="#2a9a2a" stroke-width="2" fill="none"/><path d="M10 9 A3 3 0 0 1 4 10" stroke="#2a9a2a" stroke-width="2" fill="none"/></svg><svg class="r" style="left:81px;top:477px;" width="14" height="14" viewBox="0 0 14 14"><rect x="0.5" y="0.5" width="13" height="11" fill="#1a1a1a" stroke="#666"/><path d="M2 7 L5 5 L8 7 L12 4" stroke="#2ae02a" stroke-width="1.5" fill="none"/><rect x="0" y="12" width="14" height="2" fill="#999"/></svg><svg class="r" style="left:104px;top:476px;" width="13" height="16" viewBox="0 0 13 16"><path d="M0.5 0.5 H9 L12.5 4 V15.5 H0.5 Z" fill="#fff" stroke="#111"/><path d="M4 4 H9 M4 4 V12 H9 M4 8 H9" stroke="#111" stroke-width="1.2" fill="none"/></svg><svg class="r" style="left:126px;top:477px;" width="16" height="15" viewBox="0 0 16 15"><rect x="0.5" y="0.5" width="15" height="14" fill="#fff" stroke="#3a6ab0"/><rect x="1" y="1" width="14" height="2" fill="#8ab0e0"/><rect x="1" y="7" width="14" height="1" fill="#3a6ab0"/></svg><svg class="r" style="left:150px;top:476px;" width="13" height="16" viewBox="0 0 13 16"><path d="M0.5 0.5 H9 L12.5 4 V15.5 H0.5 Z" fill="#f4fafc" stroke="#5a9ab0"/><circle cx="6" cy="8" r="3" fill="none" stroke="#3a8aa8" stroke-width="1.5"/><path d="M8 10 L11 13" stroke="#3a8aa8" stroke-width="1.5"/></svg><svg class="r" style="left:179px;top:476px;" width="17" height="16" viewBox="0 0 17 16"><rect x="0.5" y="6.5" width="11" height="9" fill="#f4f4f4" stroke="#7a8aa8"/><path d="M4 6 L12 1 L17 4 L10 9 Z" fill="#d8b040"/><rect x="2" y="10" width="7" height="1" fill="#7a8aa8"/><rect x="2" y="12" width="7" height="1" fill="#7a8aa8"/></svg><svg class="r" style="left:206px;top:477px;" width="13" height="13" viewBox="0 0 13 13"><path d="M1 1 L12 12 M11 1 L2 12" stroke="#e02a3a" stroke-width="2.6"/></svg><svg class="r" style="left:234px;top:476px;" width="16" height="15" viewBox="0 0 16 15"><rect x="1" y="3" width="5" height="11" rx="1.5" fill="#111"/><rect x="10" y="3" width="5" height="11" rx="1.5" fill="#111"/><rect x="5" y="5" width="6" height="4" fill="#111"/><rect x="3" y="0" width="3" height="4" fill="#111"/><rect x="10" y="0" width="3" height="4" fill="#111"/></svg><svg class="r" style="left:258px;top:476px;" width="16" height="16" viewBox="0 0 16 16"><circle cx="8" cy="8" r="6.5" fill="none" stroke="#111" stroke-width="1.5"/><circle cx="8" cy="8" r="3" fill="none" stroke="#111" stroke-width="1.2"/><path d="M8 0 V16 M0 8 H16" stroke="#111" stroke-width="1.2"/></svg><svg class="r" style="left:294px;top:473px;" width="63" height="24" viewBox="0 0 63 24"><rect x="0.5" y="0.5" width="62" height="23" fill="#f0f0f0" stroke="#8a8a8a"/><path d="M1 16 L4 17 L7 15 L9 16 L11 14 L13 16 L16 17 L19 16 L22 15 L25 13 L27 16 L30 17 L33 16 L36 15 L39 16 L42 17 L45 16 L48 15 L51 16 L54 16 L57 17 L62 16 L62 23 L1 23 Z" fill="#a8dca8" stroke="none"/><path d="M1 16 L4 17 L7 15 L9 16 L11 14 L13 16 L16 17 L19 16 L22 15 L25 13 L27 16 L30 17 L33 16 L36 15 L39 16 L42 17 L45 16 L48 15 L51 16 L54 16 L57 17 L62 16" stroke="#2a8a3a" stroke-width="1.3" fill="none"/><path d="M2 21.5 H6 M10 21.5 H13 M18 21.5 H24 M28 21.5 H33 M40 21.5 H45 M50 21.5 H55" stroke="#d02020" stroke-width="1.5"/></svg><svg class="r" style="left:373px;top:473px;" width="62" height="24" viewBox="0 0 62 24"><rect x="0.5" y="0.5" width="61" height="23" fill="#f0f0f0" stroke="#8a8a8a"/><rect x="1" y="16" width="60" height="7" fill="#cfd47a"/><rect x="1" y="15" width="60" height="1.6" fill="#98a418"/></svg><svg class="r" style="left:452px;top:473px;" width="62" height="24" viewBox="0 0 62 24"><rect x="0.5" y="0.5" width="61" height="23" fill="#f0f0f0" stroke="#8a8a8a"/><rect x="1" y="16" width="60" height="7" fill="#f9c0a0"/><rect x="1" y="15" width="60" height="1.6" fill="#f07a4a"/></svg><svg class="r" style="left:531px;top:473px;" width="62" height="24" viewBox="0 0 62 24"><rect x="0.5" y="0.5" width="61" height="23" fill="#f0f0f0" stroke="#8a8a8a"/></svg><svg class="r" style="left:610px;top:473px;" width="177" height="24" viewBox="0 0 177 24"><rect x="0.5" y="0.5" width="176" height="23" fill="#f0f0f0" stroke="#8a8a8a"/></svg><div class="r" style="left:4px;top:497px;width:783px;height:1px;background:#6a6a6a;"></div><svg class="r" style="left:101px;top:498px;" width="9" height="6" viewBox="0 0 9 6"><path d="M0.5 5 L4.5 1 L8.5 5" stroke="#777" fill="none"/></svg><div class="r" style="left:207px;top:503px;width:36px;height:17px;background:#b7dcb7;"></div><div class="r" style="left:247px;top:503px;width:76px;height:17px;background:#fde58a;"></div><div class="r" style="left:327px;top:503px;width:76px;height:17px;background:#fcb493;"></div><div class="r" style="left:204px;top:498px;width:1px;height:23px;background:#ececec;"></div><div class="r" style="left:245px;top:498px;width:1px;height:23px;background:#ececec;"></div><div class="r" style="left:325px;top:498px;width:1px;height:23px;background:#ececec;"></div><div class="r" style="left:404px;top:498px;width:1px;height:23px;background:#ececec;"></div><div class="r" style="left:444px;top:498px;width:1px;height:23px;background:#ececec;"></div><div class="r" style="left:594px;top:498px;width:1px;height:23px;background:#ececec;"></div><div class="r" style="left:735px;top:498px;width:1px;height:23px;background:#ececec;"></div><div class="t" style="left:11px;top:505px;font-size:11px;color:#000;letter-spacing:-0.3px;">Process</div><div class="t" style="left:-158px;width:400px;text-align:right;top:505px;font-size:11px;color:#000;letter-spacing:-0.3px;">CPU</div><div class="t" style="left:-78px;width:400px;text-align:right;top:505px;font-size:11px;color:#000;letter-spacing:-0.3px;">Private Bytes</div><div class="t" style="left:2px;width:400px;text-align:right;top:505px;font-size:11px;color:#000;letter-spacing:-0.3px;">Working Set</div><div class="t" style="left:38px;width:400px;text-align:right;top:505px;font-size:11px;color:#000;letter-spacing:-0.3px;">PID</div><div class="t" style="left:450px;top:505px;font-size:11px;color:#000;letter-spacing:-0.3px;">Description</div><div class="t" style="left:601px;top:505px;font-size:11px;color:#000;letter-spacing:-0.3px;">Company Name</div><div class="r" style="left:205px;top:522px;width:40px;height:468px;background:#eef5ee;"></div><div class="r" style="left:245px;top:522px;width:80px;height:468px;background:#fffbee;"></div><div class="r" style="left:325px;top:522px;width:79px;height:468px;background:#fdefe9;"></div><div class="r" style="left:4px;top:522px;width:767px;height:468px;overflow:hidden;"><div class="r" style="left:37px;top:0px;width:163px;height:16px;background:#d0d0ff;"></div><div class="r" style="left:401px;top:0px;width:330px;height:16px;background:#d0d0ff;"></div><svg class="r" style="left:19px;top:0px" width="16" height="16" viewBox="0 0 16 16"><path d="M0.5 7.5 L7 1 L11 5 L4.5 11.5 Z" fill="#c4c4c4" stroke="#8a8a8a" stroke-width="0.6"/><path d="M4.5 9 L10 4.5 L15.5 9.5 L8.5 15.5 L5.5 12.5 L10 9.5 Z" fill="#d8202c"/></svg><div class="t" style="left:37px;top:2px;font-size:11px;color:#000;letter-spacing:-0.3px;">syncappw.exe</div><div class="t" style="left:-161px;width:400px;text-align:right;top:2px;font-size:11px;color:#000;letter-spacing:-0.3px;"></div><div class="t" style="left:-81px;width:400px;text-align:right;top:2px;font-size:11px;color:#000;letter-spacing:-0.3px;">14,624 K</div><div class="t" style="left:-1px;width:400px;text-align:right;top:2px;font-size:11px;color:#000;letter-spacing:-0.3px;">26,120 K</div><div class="t" style="left:39px;width:400px;text-align:right;top:2px;font-size:11px;color:#000;letter-spacing:-0.3px;">14116</div><div class="t" style="left:442px;top:2px;font-size:11px;color:#000;letter-spacing:-0.3px;"></div><div class="t" style="left:593px;top:2px;font-size:11px;color:#000;letter-spacing:-0.3px;"></div><div class="r" style="left:37px;top:16px;width:163px;height:16px;background:#ffd0d0;"></div><div class="r" style="left:401px;top:16px;width:330px;height:16px;background:#ffd0d0;"></div><svg class="r" style="left:19px;top:16px" width="16" height="16" viewBox="0 0 16 16"><rect x="0.5" y="2.5" width="15" height="11" fill="#fdfdfd" stroke="#8a8a8a"/><rect x="1" y="3" width="14" height="1.5" fill="#c8c8c8"/><rect x="3" y="6" width="4" height="6" fill="#1e6fd0"/><rect x="9" y="6" width="5" height="1" fill="#777"/><rect x="9" y="8" width="5" height="1" fill="#777"/><rect x="9" y="10" width="5" height="1" fill="#777"/></svg><div class="t" style="left:37px;top:18px;font-size:11px;color:#000;letter-spacing:-0.3px;">SyncService.exe</div><div class="t" style="left:-161px;width:400px;text-align:right;top:18px;font-size:11px;color:#000;letter-spacing:-0.3px;"></div><div class="t" style="left:-81px;width:400px;text-align:right;top:18px;font-size:11px;color:#000;letter-spacing:-0.3px;">1,536 K</div><div class="t" style="left:-1px;width:400px;text-align:right;top:18px;font-size:11px;color:#000;letter-spacing:-0.3px;">6,304 K</div><div class="t" style="left:39px;width:400px;text-align:right;top:18px;font-size:11px;color:#000;letter-spacing:-0.3px;">5176</div><div class="t" style="left:442px;top:18px;font-size:11px;color:#000;letter-spacing:-0.3px;"></div><div class="t" style="left:593px;top:18px;font-size:11px;color:#000;letter-spacing:-0.3px;"></div><svg class="r" style="left:19px;top:32px" width="16" height="16" viewBox="0 0 16 16"><rect x="0.5" y="1.5" width="15" height="13" fill="#e6e9e8" stroke="#9aa0a0"/><rect x="1" y="2" width="14" height="2" fill="#b5bcbb"/><rect x="2.5" y="5" width="5" height="8" fill="#3f8a73"/><rect x="9" y="5" width="5" height="8" fill="#dfe5e3"/></svg><svg class="r" style="left:7px;top:36px" width="9" height="9" viewBox="0 0 9 9"><rect x="0.5" y="0.5" width="8" height="8" fill="#fff" stroke="#9a9a9a"/><rect x="2" y="4" width="5" height="1" fill="#444"/></svg><div class="t" style="left:37px;top:34px;font-size:11px;color:#000;letter-spacing:-0.3px;">System</div><div class="t" style="left:-161px;width:400px;text-align:right;top:34px;font-size:11px;color:#000;letter-spacing:-0.3px;">0.73</div><div class="t" style="left:-81px;width:400px;text-align:right;top:34px;font-size:11px;color:#000;letter-spacing:-0.3px;">196 K</div><div class="t" style="left:-1px;width:400px;text-align:right;top:34px;font-size:11px;color:#000;letter-spacing:-0.3px;">1,348 K</div><div class="t" style="left:39px;width:400px;text-align:right;top:34px;font-size:11px;color:#000;letter-spacing:-0.3px;">4</div><div class="t" style="left:442px;top:34px;font-size:11px;color:#000;letter-spacing:-0.3px;"></div><div class="t" style="left:593px;top:34px;font-size:11px;color:#000;letter-spacing:-0.3px;"></div><svg class="r" style="left:19px;top:48px" width="16" height="16" viewBox="0 0 16 16"><rect x="0.5" y="1.5" width="15" height="13" fill="#e6e9e8" stroke="#9aa0a0"/><rect x="1" y="2" width="14" height="2" fill="#b5bcbb"/><rect x="2.5" y="5" width="5" height="8" fill="#3f8a73"/><rect x="9" y="5" width="5" height="8" fill="#dfe5e3"/></svg><div class="t" style="left:37px;top:50px;font-size:11px;color:#000;letter-spacing:-0.3px;">System Idle Process</div><div class="t" style="left:-161px;width:400px;text-align:right;top:50px;font-size:11px;color:#000;letter-spacing:-0.3px;">72.30</div><div class="t" style="left:-81px;width:400px;text-align:right;top:50px;font-size:11px;color:#000;letter-spacing:-0.3px;">60 K</div><div class="t" style="left:-1px;width:400px;text-align:right;top:50px;font-size:11px;color:#000;letter-spacing:-0.3px;">8 K</div><div class="t" style="left:39px;width:400px;text-align:right;top:50px;font-size:11px;color:#000;letter-spacing:-0.3px;">0</div><div class="t" style="left:442px;top:50px;font-size:11px;color:#000;letter-spacing:-0.3px;"></div><div class="t" style="left:593px;top:50px;font-size:11px;color:#000;letter-spacing:-0.3px;"></div><div class="r" style="left:37px;top:64px;width:163px;height:16px;background:#d0d0ff;"></div><div class="r" style="left:401px;top:64px;width:330px;height:16px;background:#d0d0ff;"></div><svg class="r" style="left:19px;top:64px" width="16" height="16" viewBox="0 0 16 16"><rect x="0.5" y="2.5" width="15" height="11" fill="#fdfdfd" stroke="#8a8a8a"/><rect x="1" y="3" width="14" height="1.5" fill="#c8c8c8"/><rect x="3" y="6" width="4" height="6" fill="#1e6fd0"/><rect x="9" y="6" width="5" height="1" fill="#777"/><rect x="9" y="8" width="5" height="1" fill="#777"/><rect x="9" y="10" width="5" height="1" fill="#777"/></svg><div class="t" style="left:37px;top:66px;font-size:11px;color:#000;letter-spacing:-0.3px;">taskhostw.exe</div><div class="t" style="left:-161px;width:400px;text-align:right;top:66px;font-size:11px;color:#000;letter-spacing:-0.3px;"></div><div class="t" style="left:-81px;width:400px;text-align:right;top:66px;font-size:11px;color:#000;letter-spacing:-0.3px;">7,132 K</div><div class="t" style="left:-1px;width:400px;text-align:right;top:66px;font-size:11px;color:#000;letter-spacing:-0.3px;">17,300 K</div><div class="t" style="left:39px;width:400px;text-align:right;top:66px;font-size:11px;color:#000;letter-spacing:-0.3px;">3180</div><div class="t" style="left:442px;top:66px;font-size:11px;color:#000;letter-spacing:-0.3px;">Host Process for Windows T...</div><div class="t" style="left:593px;top:66px;font-size:11px;color:#000;letter-spacing:-0.3px;">Microsoft Corporation</div><div class="r" style="left:37px;top:80px;width:163px;height:16px;background:#00e6e6;"></div><div class="r" style="left:401px;top:80px;width:330px;height:16px;background:#00e6e6;"></div><svg class="r" style="left:19px;top:80px" width="16" height="16" viewBox="0 0 16 16"><rect x="0.5" y="1.5" width="15" height="13" fill="#e6e9e8" stroke="#9aa0a0"/><rect x="1" y="2" width="14" height="2" fill="#b5bcbb"/><rect x="2.5" y="5" width="5" height="8" fill="#3f8a73"/><rect x="9" y="5" width="5" height="8" fill="#dfe5e3"/></svg><div class="t" style="left:37px;top:82px;font-size:11px;color:#000;letter-spacing:-0.3px;">Taskmgr.exe</div><div class="t" style="left:-161px;width:400px;text-align:right;top:82px;font-size:11px;color:#000;letter-spacing:-0.3px;">0.61</div><div class="t" style="left:-81px;width:400px;text-align:right;top:82px;font-size:11px;color:#000;letter-spacing:-0.3px;">27,400 K</div><div class="t" style="left:-1px;width:400px;text-align:right;top:82px;font-size:11px;color:#000;letter-spacing:-0.3px;">53,340 K</div><div class="t" style="left:39px;width:400px;text-align:right;top:82px;font-size:11px;color:#000;letter-spacing:-0.3px;">11528</div><div class="t" style="left:442px;top:82px;font-size:11px;color:#000;letter-spacing:-0.3px;"></div><div class="t" style="left:593px;top:82px;font-size:11px;color:#000;letter-spacing:-0.3px;"></div><div class="r" style="left:37px;top:96px;width:163px;height:16px;background:#d0d0ff;"></div><div class="r" style="left:401px;top:96px;width:330px;height:16px;background:#d0d0ff;"></div><svg class="r" style="left:19px;top:96px" width="16" height="16" viewBox="0 0 16 16"><rect x="0" y="0" width="16" height="16" fill="#1a72c8"/><circle cx="8" cy="8" r="6.8" fill="#f4faff"/><path d="M2.5 8 L5.5 5.5 V7.2 H10.5 V5.5 L13.5 8 L10.5 10.5 V8.8 H5.5 V10.5 Z" fill="#1a5aa8"/></svg><div class="t" style="left:37px;top:98px;font-size:11px;color:#000;letter-spacing:-0.3px;">TeamViewer.exe</div><div class="t" style="left:-161px;width:400px;text-align:right;top:98px;font-size:11px;color:#000;letter-spacing:-0.3px;">0.28</div><div class="t" style="left:-81px;width:400px;text-align:right;top:98px;font-size:11px;color:#000;letter-spacing:-0.3px;">21,116 K</div><div class="t" style="left:-1px;width:400px;text-align:right;top:98px;font-size:11px;color:#000;letter-spacing:-0.3px;">45,652 K</div><div class="t" style="left:39px;width:400px;text-align:right;top:98px;font-size:11px;color:#000;letter-spacing:-0.3px;">756</div><div class="t" style="left:442px;top:98px;font-size:11px;color:#000;letter-spacing:-0.3px;">TeamViewer 14</div><div class="t" style="left:593px;top:98px;font-size:11px;color:#000;letter-spacing:-0.3px;">TeamViewer GmbH</div><div class="r" style="left:37px;top:112px;width:163px;height:16px;background:#ffd0d0;"></div><div class="r" style="left:401px;top:112px;width:330px;height:16px;background:#ffd0d0;"></div><svg class="r" style="left:19px;top:112px" width="16" height="16" viewBox="0 0 16 16"><rect x="0" y="0" width="16" height="16" fill="#1a72c8"/><circle cx="8" cy="8" r="6.8" fill="#f4faff"/><path d="M2.5 8 L5.5 5.5 V7.2 H10.5 V5.5 L13.5 8 L10.5 10.5 V8.8 H5.5 V10.5 Z" fill="#1a5aa8"/></svg><svg class="r" style="left:7px;top:116px" width="9" height="9" viewBox="0 0 9 9"><rect x="0.5" y="0.5" width="8" height="8" fill="#fff" stroke="#9a9a9a"/><rect x="2" y="4" width="5" height="1" fill="#444"/></svg><div class="t" style="left:37px;top:114px;font-size:11px;color:#000;letter-spacing:-0.3px;">TeamViewer_Service.exe</div><div class="t" style="left:-161px;width:400px;text-align:right;top:114px;font-size:11px;color:#000;letter-spacing:-0.3px;">0.01</div><div class="t" style="left:-81px;width:400px;text-align:right;top:114px;font-size:11px;color:#000;letter-spacing:-0.3px;">8,632 K</div><div class="t" style="left:-1px;width:400px;text-align:right;top:114px;font-size:11px;color:#000;letter-spacing:-0.3px;">23,376 K</div><div class="t" style="left:39px;width:400px;text-align:right;top:114px;font-size:11px;color:#000;letter-spacing:-0.3px;">5512</div><div class="t" style="left:442px;top:114px;font-size:11px;color:#000;letter-spacing:-0.3px;">TeamViewer 14</div><div class="t" style="left:593px;top:114px;font-size:11px;color:#000;letter-spacing:-0.3px;">TeamViewer GmbH</div><div class="r" style="left:37px;top:128px;width:163px;height:16px;background:#808080;"></div><div class="r" style="left:401px;top:128px;width:330px;height:16px;background:#808080;"></div><svg class="r" style="left:19px;top:128px" width="16" height="16" viewBox="0 0 16 16"><rect x="0.5" y="1.5" width="15" height="13" fill="#e6e9e8" stroke="#9aa0a0"/><rect x="1" y="2" width="14" height="2" fill="#b5bcbb"/><rect x="2.5" y="5" width="5" height="8" fill="#3f8a73"/><rect x="9" y="5" width="5" height="8" fill="#dfe5e3"/></svg><div class="t" style="left:37px;top:130px;font-size:11px;color:#000;letter-spacing:-0.3px;">TESvc.exe</div><div class="t" style="left:-161px;width:400px;text-align:right;top:130px;font-size:11px;color:#000;letter-spacing:-0.3px;">Susp...</div><div class="t" style="left:-81px;width:400px;text-align:right;top:130px;font-size:11px;color:#000;letter-spacing:-0.3px;">9,616 K</div><div class="t" style="left:-1px;width:400px;text-align:right;top:130px;font-size:11px;color:#000;letter-spacing:-0.3px;">136 K</div><div class="t" style="left:39px;width:400px;text-align:right;top:130px;font-size:11px;color:#000;letter-spacing:-0.3px;">13536</div><div class="t" style="left:442px;top:130px;font-size:11px;color:#000;letter-spacing:-0.3px;"></div><div class="t" style="left:593px;top:130px;font-size:11px;color:#000;letter-spacing:-0.3px;"></div><div class="r" style="left:37px;top:144px;width:163px;height:16px;background:#d0d0ff;"></div><div class="r" style="left:401px;top:144px;width:330px;height:16px;background:#d0d0ff;"></div><svg class="r" style="left:19px;top:144px" width="16" height="16" viewBox="0 0 16 16"><rect x="0.5" y="0.5" width="15" height="15" fill="#eef0f2" stroke="#9aa0a6"/><path d="M4 12 L12 4 M4 5 L12 11 M8 3 L8 13 M3 8 L13 8" stroke="#2a3c9a" stroke-width="1.2"/><circle cx="8" cy="8" r="2" fill="#1a2a80"/></svg><div class="t" style="left:37px;top:146px;font-size:11px;color:#000;letter-spacing:-0.3px;">ThreatEmulation.exe</div><div class="t" style="left:-161px;width:400px;text-align:right;top:146px;font-size:11px;color:#000;letter-spacing:-0.3px;">0.17</div><div class="t" style="left:-81px;width:400px;text-align:right;top:146px;font-size:11px;color:#000;letter-spacing:-0.3px;">64,720 K</div><div class="t" style="left:-1px;width:400px;text-align:right;top:146px;font-size:11px;color:#000;letter-spacing:-0.3px;">56,272 K</div><div class="t" style="left:39px;width:400px;text-align:right;top:146px;font-size:11px;color:#000;letter-spacing:-0.3px;">13088</div><div class="t" style="left:442px;top:146px;font-size:11px;color:#000;letter-spacing:-0.3px;">ThreatEmulation</div><div class="t" style="left:593px;top:146px;font-size:11px;color:#000;letter-spacing:-0.3px;">Check Point Software Tec...</div><div class="r" style="left:37px;top:160px;width:163px;height:16px;background:#d0d0ff;"></div><div class="r" style="left:401px;top:160px;width:330px;height:16px;background:#d0d0ff;"></div><svg class="r" style="left:19px;top:160px" width="16" height="16" viewBox="0 0 16 16"><rect x="0.5" y="2.5" width="15" height="11" fill="#fdfdfd" stroke="#8a8a8a"/><rect x="1" y="3" width="14" height="1.5" fill="#c8c8c8"/><rect x="3" y="6" width="4" height="6" fill="#1e6fd0"/><rect x="9" y="6" width="5" height="1" fill="#777"/><rect x="9" y="8" width="5" height="1" fill="#777"/><rect x="9" y="10" width="5" height="1" fill="#777"/></svg><div class="t" style="left:37px;top:162px;font-size:11px;color:#000;letter-spacing:-0.3px;">TrayTipAgentE.exe</div><div class="t" style="left:-161px;width:400px;text-align:right;top:162px;font-size:11px;color:#000;letter-spacing:-0.3px;">&lt; 0.01</div><div class="t" style="left:-81px;width:400px;text-align:right;top:162px;font-size:11px;color:#000;letter-spacing:-0.3px;">5,440 K</div><div class="t" style="left:-1px;width:400px;text-align:right;top:162px;font-size:11px;color:#000;letter-spacing:-0.3px;">8,952 K</div><div class="t" style="left:39px;width:400px;text-align:right;top:162px;font-size:11px;color:#000;letter-spacing:-0.3px;">15704</div><div class="t" style="left:442px;top:162px;font-size:11px;color:#000;letter-spacing:-0.3px;"></div><div class="t" style="left:593px;top:162px;font-size:11px;color:#000;letter-spacing:-0.3px;"></div><svg class="r" style="left:19px;top:176px" width="16" height="16" viewBox="0 0 16 16"><rect x="0.5" y="1.5" width="15" height="13" fill="#e6e9e8" stroke="#9aa0a0"/><rect x="1" y="2" width="14" height="2" fill="#b5bcbb"/><rect x="2.5" y="5" width="5" height="8" fill="#3f8a73"/><rect x="9" y="5" width="5" height="8" fill="#dfe5e3"/></svg><div class="t" style="left:37px;top:178px;font-size:11px;color:#000;letter-spacing:-0.3px;">tv_w32.exe</div><div class="t" style="left:-161px;width:400px;text-align:right;top:178px;font-size:11px;color:#000;letter-spacing:-0.3px;">&lt; 0.01</div><div class="t" style="left:-81px;width:400px;text-align:right;top:178px;font-size:11px;color:#000;letter-spacing:-0.3px;">1,568 K</div><div class="t" style="left:-1px;width:400px;text-align:right;top:178px;font-size:11px;color:#000;letter-spacing:-0.3px;">7,584 K</div><div class="t" style="left:39px;width:400px;text-align:right;top:178px;font-size:11px;color:#000;letter-spacing:-0.3px;">11232</div><div class="t" style="left:442px;top:178px;font-size:11px;color:#000;letter-spacing:-0.3px;"></div><div class="t" style="left:593px;top:178px;font-size:11px;color:#000;letter-spacing:-0.3px;"></div><svg class="r" style="left:19px;top:192px" width="16" height="16" viewBox="0 0 16 16"><rect x="0.5" y="1.5" width="15" height="13" fill="#e6e9e8" stroke="#9aa0a0"/><rect x="1" y="2" width="14" height="2" fill="#b5bcbb"/><rect x="2.5" y="5" width="5" height="8" fill="#3f8a73"/><rect x="9" y="5" width="5" height="8" fill="#dfe5e3"/></svg><div class="t" style="left:37px;top:194px;font-size:11px;color:#000;letter-spacing:-0.3px;">tv_x64.exe</div><div class="t" style="left:-161px;width:400px;text-align:right;top:194px;font-size:11px;color:#000;letter-spacing:-0.3px;">&lt; 0.01</div><div class="t" style="left:-81px;width:400px;text-align:right;top:194px;font-size:11px;color:#000;letter-spacing:-0.3px;">1,596 K</div><div class="t" style="left:-1px;width:400px;text-align:right;top:194px;font-size:11px;color:#000;letter-spacing:-0.3px;">7,484 K</div><div class="t" style="left:39px;width:400px;text-align:right;top:194px;font-size:11px;color:#000;letter-spacing:-0.3px;">8232</div><div class="t" style="left:442px;top:194px;font-size:11px;color:#000;letter-spacing:-0.3px;"></div><div class="t" style="left:593px;top:194px;font-size:11px;color:#000;letter-spacing:-0.3px;"></div><div class="r" style="left:37px;top:208px;width:163px;height:16px;background:#ffd0d0;"></div><div class="r" style="left:401px;top:208px;width:330px;height:16px;background:#ffd0d0;"></div><svg class="r" style="left:19px;top:208px" width="16" height="16" viewBox="0 0 16 16"><rect x="0.5" y="2.5" width="15" height="11" fill="#fdfdfd" stroke="#8a8a8a"/><rect x="1" y="3" width="14" height="1.5" fill="#c8c8c8"/><rect x="3" y="6" width="4" height="6" fill="#1e6fd0"/><rect x="9" y="6" width="5" height="1" fill="#777"/><rect x="9" y="8" width="5" height="1" fill="#777"/><rect x="9" y="10" width="5" height="1" fill="#777"/></svg><div class="t" style="left:37px;top:210px;font-size:11px;color:#000;letter-spacing:-0.3px;">vmnat.exe</div><div class="t" style="left:-161px;width:400px;text-align:right;top:210px;font-size:11px;color:#000;letter-spacing:-0.3px;">&lt; 0.01</div><div class="t" style="left:-81px;width:400px;text-align:right;top:210px;font-size:11px;color:#000;letter-spacing:-0.3px;">2,456 K</div><div class="t" style="left:-1px;width:400px;text-align:right;top:210px;font-size:11px;color:#000;letter-spacing:-0.3px;">7,396 K</div><div class="t" style="left:39px;width:400px;text-align:right;top:210px;font-size:11px;color:#000;letter-spacing:-0.3px;">5484</div><div class="t" style="left:442px;top:210px;font-size:11px;color:#000;letter-spacing:-0.3px;">VMware NAT Service</div><div class="t" style="left:593px;top:210px;font-size:11px;color:#000;letter-spacing:-0.3px;">VMware, Inc.</div><div class="r" style="left:37px;top:224px;width:163px;height:16px;background:#ffd0d0;"></div><div class="r" style="left:401px;top:224px;width:330px;height:16px;background:#ffd0d0;"></div><svg class="r" style="left:19px;top:224px" width="16" height="16" viewBox="0 0 16 16"><rect x="0.5" y="2.5" width="15" height="11" fill="#fdfdfd" stroke="#8a8a8a"/><rect x="1" y="3" width="14" height="1.5" fill="#c8c8c8"/><rect x="3" y="6" width="4" height="6" fill="#1e6fd0"/><rect x="9" y="6" width="5" height="1" fill="#777"/><rect x="9" y="8" width="5" height="1" fill="#777"/><rect x="9" y="10" width="5" height="1" fill="#777"/></svg><div class="t" style="left:37px;top:226px;font-size:11px;color:#000;letter-spacing:-0.3px;">vmnetdhcp.exe</div><div class="t" style="left:-161px;width:400px;text-align:right;top:226px;font-size:11px;color:#000;letter-spacing:-0.3px;">&lt; 0.01</div><div class="t" style="left:-81px;width:400px;text-align:right;top:226px;font-size:11px;color:#000;letter-spacing:-0.3px;">7,792 K</div><div class="t" style="left:-1px;width:400px;text-align:right;top:226px;font-size:11px;color:#000;letter-spacing:-0.3px;">5,068 K</div><div class="t" style="left:39px;width:400px;text-align:right;top:226px;font-size:11px;color:#000;letter-spacing:-0.3px;">5436</div><div class="t" style="left:442px;top:226px;font-size:11px;color:#000;letter-spacing:-0.3px;">VMware VMnet DHCP service</div><div class="t" style="left:593px;top:226px;font-size:11px;color:#000;letter-spacing:-0.3px;">VMware, Inc.</div><div class="r" style="left:37px;top:240px;width:163px;height:16px;background:#ffd0d0;"></div><div class="r" style="left:401px;top:240px;width:330px;height:16px;background:#ffd0d0;"></div><svg class="r" style="left:19px;top:240px" width="16" height="16" viewBox="0 0 16 16"><rect x="0.5" y="2.5" width="15" height="11" fill="#fdfdfd" stroke="#8a8a8a"/><rect x="1" y="3" width="14" height="1.5" fill="#c8c8c8"/><rect x="3" y="6" width="4" height="6" fill="#1e6fd0"/><rect x="9" y="6" width="5" height="1" fill="#777"/><rect x="9" y="8" width="5" height="1" fill="#777"/><rect x="9" y="10" width="5" height="1" fill="#777"/></svg><div class="t" style="left:37px;top:242px;font-size:11px;color:#000;letter-spacing:-0.3px;">vmware-authd.exe</div><div class="t" style="left:-161px;width:400px;text-align:right;top:242px;font-size:11px;color:#000;letter-spacing:-0.3px;">0.16</div><div class="t" style="left:-81px;width:400px;text-align:right;top:242px;font-size:11px;color:#000;letter-spacing:-0.3px;">6,632 K</div><div class="t" style="left:-1px;width:400px;text-align:right;top:242px;font-size:11px;color:#000;letter-spacing:-0.3px;">12,416 K</div><div class="t" style="left:39px;width:400px;text-align:right;top:242px;font-size:11px;color:#000;letter-spacing:-0.3px;">5424</div><div class="t" style="left:442px;top:242px;font-size:11px;color:#000;letter-spacing:-0.3px;">VMware Authorization Service</div><div class="t" style="left:593px;top:242px;font-size:11px;color:#000;letter-spacing:-0.3px;">VMware, Inc.</div><div class="r" style="left:37px;top:256px;width:163px;height:16px;background:#ffd0d0;"></div><div class="r" style="left:401px;top:256px;width:330px;height:16px;background:#ffd0d0;"></div><svg class="r" style="left:19px;top:256px" width="16" height="16" viewBox="0 0 16 16"><rect x="0.5" y="2.5" width="15" height="11" fill="#fdfdfd" stroke="#8a8a8a"/><rect x="1" y="3" width="14" height="1.5" fill="#c8c8c8"/><rect x="3" y="6" width="4" height="6" fill="#1e6fd0"/><rect x="9" y="6" width="5" height="1" fill="#777"/><rect x="9" y="8" width="5" height="1" fill="#777"/><rect x="9" y="10" width="5" height="1" fill="#777"/></svg><div class="t" style="left:37px;top:258px;font-size:11px;color:#000;letter-spacing:-0.3px;">vmware-hostd.exe</div><div class="t" style="left:-161px;width:400px;text-align:right;top:258px;font-size:11px;color:#000;letter-spacing:-0.3px;">&lt; 0.01</div><div class="t" style="left:-81px;width:400px;text-align:right;top:258px;font-size:11px;color:#000;letter-spacing:-0.3px;">31,780 K</div><div class="t" style="left:-1px;width:400px;text-align:right;top:258px;font-size:11px;color:#000;letter-spacing:-0.3px;">48,792 K</div><div class="t" style="left:39px;width:400px;text-align:right;top:258px;font-size:11px;color:#000;letter-spacing:-0.3px;">7928</div><div class="t" style="left:442px;top:258px;font-size:11px;color:#000;letter-spacing:-0.3px;"></div><div class="t" style="left:593px;top:258px;font-size:11px;color:#000;letter-spacing:-0.3px;"></div><div class="r" style="left:37px;top:272px;width:163px;height:16px;background:#d0d0ff;"></div><div class="r" style="left:401px;top:272px;width:330px;height:16px;background:#d0d0ff;"></div><div class="t" style="left:37px;top:274px;font-size:11px;color:#000;letter-spacing:-0.3px;">vmware-tray.exe</div><div class="t" style="left:-161px;width:400px;text-align:right;top:274px;font-size:11px;color:#000;letter-spacing:-0.3px;"></div><div class="t" style="left:-81px;width:400px;text-align:right;top:274px;font-size:11px;color:#000;letter-spacing:-0.3px;">3,880 K</div><div class="t" style="left:-1px;width:400px;text-align:right;top:274px;font-size:11px;color:#000;letter-spacing:-0.3px;">10,428 K</div><div class="t" style="left:39px;width:400px;text-align:right;top:274px;font-size:11px;color:#000;letter-spacing:-0.3px;">16256</div><div class="t" style="left:442px;top:274px;font-size:11px;color:#000;letter-spacing:-0.3px;">VMware Tray Process</div><div class="t" style="left:593px;top:274px;font-size:11px;color:#000;letter-spacing:-0.3px;">VMware, Inc.</div><div class="r" style="left:37px;top:288px;width:163px;height:16px;background:#ffd0d0;"></div><div class="r" style="left:401px;top:288px;width:330px;height:16px;background:#ffd0d0;"></div><svg class="r" style="left:19px;top:288px" width="16" height="16" viewBox="0 0 16 16"><rect x="0.5" y="2.5" width="15" height="11" fill="#fdfdfd" stroke="#8a8a8a"/><rect x="1" y="3" width="14" height="1.5" fill="#c8c8c8"/><rect x="3" y="6" width="4" height="6" fill="#1e6fd0"/><rect x="9" y="6" width="5" height="1" fill="#777"/><rect x="9" y="8" width="5" height="1" fill="#777"/><rect x="9" y="10" width="5" height="1" fill="#777"/></svg><div class="t" style="left:37px;top:290px;font-size:11px;color:#000;letter-spacing:-0.3px;">vmware-usbarbitrator64.exe</div><div class="t" style="left:-161px;width:400px;text-align:right;top:290px;font-size:11px;color:#000;letter-spacing:-0.3px;">&lt; 0.01</div><div class="t" style="left:-81px;width:400px;text-align:right;top:290px;font-size:11px;color:#000;letter-spacing:-0.3px;">2,708 K</div><div class="t" style="left:-1px;width:400px;text-align:right;top:290px;font-size:11px;color:#000;letter-spacing:-0.3px;">10,684 K</div><div class="t" style="left:39px;width:400px;text-align:right;top:290px;font-size:11px;color:#000;letter-spacing:-0.3px;">5476</div><div class="t" style="left:442px;top:290px;font-size:11px;color:#000;letter-spacing:-0.3px;">VMware USB Arbitration Ser...</div><div class="t" style="left:593px;top:290px;font-size:11px;color:#000;letter-spacing:-0.3px;">VMware, Inc.</div><svg class="r" style="left:19px;top:304px" width="16" height="16" viewBox="0 0 16 16"><rect x="0.5" y="1.5" width="15" height="13" fill="#e6e9e8" stroke="#9aa0a0"/><rect x="1" y="2" width="14" height="2" fill="#b5bcbb"/><rect x="2.5" y="5" width="5" height="8" fill="#3f8a73"/><rect x="9" y="5" width="5" height="8" fill="#dfe5e3"/></svg><div class="t" style="left:37px;top:306px;font-size:11px;color:#000;letter-spacing:-0.3px;">vncagent.exe</div><div class="t" style="left:-161px;width:400px;text-align:right;top:306px;font-size:11px;color:#000;letter-spacing:-0.3px;"></div><div class="t" style="left:-81px;width:400px;text-align:right;top:306px;font-size:11px;color:#000;letter-spacing:-0.3px;">1,868 K</div><div class="t" style="left:-1px;width:400px;text-align:right;top:306px;font-size:11px;color:#000;letter-spacing:-0.3px;">8,616 K</div><div class="t" style="left:39px;width:400px;text-align:right;top:306px;font-size:11px;color:#000;letter-spacing:-0.3px;">6164</div><div class="t" style="left:442px;top:306px;font-size:11px;color:#000;letter-spacing:-0.3px;"></div><div class="t" style="left:593px;top:306px;font-size:11px;color:#000;letter-spacing:-0.3px;"></div><div class="r" style="left:37px;top:320px;width:163px;height:16px;background:#ffd0d0;"></div><div class="r" style="left:401px;top:320px;width:330px;height:16px;background:#ffd0d0;"></div><svg class="r" style="left:19px;top:320px" width="16" height="16" viewBox="0 0 16 16"><rect x="0.5" y="0.5" width="15" height="15" fill="#fff" stroke="#3a7bd5"/><path d="M2 4 L5 12 L8 4" stroke="#3a7bd5" stroke-width="1.3" fill="none"/><path d="M9 5 Q12 3 13 6 Q13 8 9 12 H14" stroke="#3a7bd5" stroke-width="1.3" fill="none"/></svg><svg class="r" style="left:7px;top:324px" width="9" height="9" viewBox="0 0 9 9"><rect x="0.5" y="0.5" width="8" height="8" fill="#fff" stroke="#9a9a9a"/><rect x="2" y="4" width="5" height="1" fill="#444"/></svg><div class="t" style="left:37px;top:322px;font-size:11px;color:#000;letter-spacing:-0.3px;">vncserver.exe</div><div class="t" style="left:-161px;width:400px;text-align:right;top:322px;font-size:11px;color:#000;letter-spacing:-0.3px;"></div><div class="t" style="left:-81px;width:400px;text-align:right;top:322px;font-size:11px;color:#000;letter-spacing:-0.3px;">32,100 K</div><div class="t" style="left:-1px;width:400px;text-align:right;top:322px;font-size:11px;color:#000;letter-spacing:-0.3px;">16,148 K</div><div class="t" style="left:39px;width:400px;text-align:right;top:322px;font-size:11px;color:#000;letter-spacing:-0.3px;">5520</div><div class="t" style="left:442px;top:322px;font-size:11px;color:#000;letter-spacing:-0.3px;">VNC® Server</div><div class="t" style="left:593px;top:322px;font-size:11px;color:#000;letter-spacing:-0.3px;">RealVNC Ltd</div><div class="r" style="left:37px;top:336px;width:163px;height:16px;background:#d0d0ff;"></div><div class="r" style="left:401px;top:336px;width:330px;height:16px;background:#d0d0ff;"></div><svg class="r" style="left:19px;top:336px" width="16" height="16" viewBox="0 0 16 16"><rect x="0.5" y="0.5" width="15" height="15" fill="#fff" stroke="#3a7bd5"/><path d="M2 4 L5 12 L8 4" stroke="#3a7bd5" stroke-width="1.3" fill="none"/><path d="M9 5 Q12 3 13 6 Q13 8 9 12 H14" stroke="#3a7bd5" stroke-width="1.3" fill="none"/></svg><div class="t" style="left:37px;top:338px;font-size:11px;color:#000;letter-spacing:-0.3px;">vncserverui.exe</div><div class="t" style="left:-161px;width:400px;text-align:right;top:338px;font-size:11px;color:#000;letter-spacing:-0.3px;"></div><div class="t" style="left:-81px;width:400px;text-align:right;top:338px;font-size:11px;color:#000;letter-spacing:-0.3px;">5,452 K</div><div class="t" style="left:-1px;width:400px;text-align:right;top:338px;font-size:11px;color:#000;letter-spacing:-0.3px;">17,624 K</div><div class="t" style="left:39px;width:400px;text-align:right;top:338px;font-size:11px;color:#000;letter-spacing:-0.3px;">7532</div><div class="t" style="left:442px;top:338px;font-size:11px;color:#000;letter-spacing:-0.3px;">VNC® Server</div><div class="t" style="left:593px;top:338px;font-size:11px;color:#000;letter-spacing:-0.3px;">RealVNC Ltd</div><div class="r" style="left:37px;top:352px;width:163px;height:16px;background:#ffd0d0;"></div><div class="r" style="left:401px;top:352px;width:330px;height:16px;background:#ffd0d0;"></div><div class="r" style="left:201px;top:352px;width:40px;height:16px;background:#d8ecd8;"></div><svg class="r" style="left:19px;top:352px" width="16" height="16" viewBox="0 0 16 16"><rect x="0.5" y="2.5" width="15" height="11" fill="#fdfdfd" stroke="#8a8a8a"/><rect x="1" y="3" width="14" height="1.5" fill="#c8c8c8"/><rect x="3" y="6" width="4" height="6" fill="#1e6fd0"/><rect x="9" y="6" width="5" height="1" fill="#777"/><rect x="9" y="8" width="5" height="1" fill="#777"/><rect x="9" y="10" width="5" height="1" fill="#777"/></svg><div class="t" style="left:37px;top:354px;font-size:11px;color:#000;letter-spacing:-0.3px;">vsmon.exe</div><div class="t" style="left:-161px;width:400px;text-align:right;top:354px;font-size:11px;color:#000;letter-spacing:-0.3px;">10.55</div><div class="t" style="left:-81px;width:400px;text-align:right;top:354px;font-size:11px;color:#000;letter-spacing:-0.3px;">219,192 K</div><div class="t" style="left:-1px;width:400px;text-align:right;top:354px;font-size:11px;color:#000;letter-spacing:-0.3px;">313,924 K</div><div class="t" style="left:39px;width:400px;text-align:right;top:354px;font-size:11px;color:#000;letter-spacing:-0.3px;">3948</div><div class="t" style="left:442px;top:354px;font-size:11px;color:#000;letter-spacing:-0.3px;">ZoneAlarm</div><div class="t" style="left:593px;top:354px;font-size:11px;color:#000;letter-spacing:-0.3px;">Check Point Software Tec...</div><svg class="r" style="left:19px;top:368px" width="16" height="16" viewBox="0 0 16 16"><rect x="0.5" y="1.5" width="15" height="13" fill="#e6e9e8" stroke="#9aa0a0"/><rect x="1" y="2" width="14" height="2" fill="#b5bcbb"/><rect x="2.5" y="5" width="5" height="8" fill="#3f8a73"/><rect x="9" y="5" width="5" height="8" fill="#dfe5e3"/></svg><svg class="r" style="left:7px;top:372px" width="9" height="9" viewBox="0 0 9 9"><rect x="0.5" y="0.5" width="8" height="8" fill="#fff" stroke="#9a9a9a"/><rect x="2" y="4" width="5" height="1" fill="#444"/></svg><div class="t" style="left:37px;top:370px;font-size:11px;color:#000;letter-spacing:-0.3px;">wininit.exe</div><div class="t" style="left:-161px;width:400px;text-align:right;top:370px;font-size:11px;color:#000;letter-spacing:-0.3px;"></div><div class="t" style="left:-81px;width:400px;text-align:right;top:370px;font-size:11px;color:#000;letter-spacing:-0.3px;">1,416 K</div><div class="t" style="left:-1px;width:400px;text-align:right;top:370px;font-size:11px;color:#000;letter-spacing:-0.3px;">6,732 K</div><div class="t" style="left:39px;width:400px;text-align:right;top:370px;font-size:11px;color:#000;letter-spacing:-0.3px;">892</div><div class="t" style="left:442px;top:370px;font-size:11px;color:#000;letter-spacing:-0.3px;"></div><div class="t" style="left:593px;top:370px;font-size:11px;color:#000;letter-spacing:-0.3px;"></div><svg class="r" style="left:19px;top:384px" width="16" height="16" viewBox="0 0 16 16"><rect x="0.5" y="1.5" width="15" height="13" fill="#e6e9e8" stroke="#9aa0a0"/><rect x="1" y="2" width="14" height="2" fill="#b5bcbb"/><rect x="2.5" y="5" width="5" height="8" fill="#3f8a73"/><rect x="9" y="5" width="5" height="8" fill="#dfe5e3"/></svg><svg class="r" style="left:7px;top:388px" width="9" height="9" viewBox="0 0 9 9"><rect x="0.5" y="0.5" width="8" height="8" fill="#fff" stroke="#9a9a9a"/><rect x="2" y="4" width="5" height="1" fill="#444"/></svg><div class="t" style="left:37px;top:386px;font-size:11px;color:#000;letter-spacing:-0.3px;">winlogon.exe</div><div class="t" style="left:-161px;width:400px;text-align:right;top:386px;font-size:11px;color:#000;letter-spacing:-0.3px;"></div><div class="t" style="left:-81px;width:400px;text-align:right;top:386px;font-size:11px;color:#000;letter-spacing:-0.3px;">3,012 K</div><div class="t" style="left:-1px;width:400px;text-align:right;top:386px;font-size:11px;color:#000;letter-spacing:-0.3px;">13,032 K</div><div class="t" style="left:39px;width:400px;text-align:right;top:386px;font-size:11px;color:#000;letter-spacing:-0.3px;">1108</div><div class="t" style="left:442px;top:386px;font-size:11px;color:#000;letter-spacing:-0.3px;"></div><div class="t" style="left:593px;top:386px;font-size:11px;color:#000;letter-spacing:-0.3px;"></div><div class="r" style="left:37px;top:400px;width:693px;height:16px;background:#b4b4b4;"></div><svg class="r" style="left:19px;top:400px" width="16" height="16" viewBox="0 0 16 16"><path d="M0 3 L16 3 L12.5 14 L9.5 14 L8 10 L6.5 14 L3.5 14 Z" fill="#56626a"/><path d="M3 4 L5.5 12 M13 4 L10.5 12 M7 4 L8 8 L9 4" stroke="#a4b0b8" stroke-width="1" fill="none"/><path d="M6 3 Q8 0 10 3" stroke="#6a767e" stroke-width="1.5" fill="none"/></svg><div class="t" style="left:37px;top:402px;font-size:11px;color:#000;letter-spacing:-0.3px;">WorkShelf.exe</div><div class="t" style="left:-161px;width:400px;text-align:right;top:402px;font-size:11px;color:#000;letter-spacing:-0.3px;">1.24</div><div class="t" style="left:-81px;width:400px;text-align:right;top:402px;font-size:11px;color:#000;letter-spacing:-0.3px;">30,152 K</div><div class="t" style="left:-1px;width:400px;text-align:right;top:402px;font-size:11px;color:#000;letter-spacing:-0.3px;">40,676 K</div><div class="t" style="left:39px;width:400px;text-align:right;top:402px;font-size:11px;color:#000;letter-spacing:-0.3px;">8808</div><div class="t" style="left:442px;top:402px;font-size:11px;color:#000;letter-spacing:-0.3px;">WorkShelf</div><div class="t" style="left:593px;top:402px;font-size:11px;color:#000;letter-spacing:-0.3px;">Winstep Software Technol...</div><div class="r" style="left:37px;top:416px;width:163px;height:16px;background:#ffd0d0;"></div><div class="r" style="left:401px;top:416px;width:330px;height:16px;background:#ffd0d0;"></div><svg class="r" style="left:19px;top:416px" width="16" height="16" viewBox="0 0 16 16"><rect x="0.5" y="1.5" width="15" height="13" fill="#e6e9e8" stroke="#9aa0a0"/><rect x="1" y="2" width="14" height="2" fill="#b5bcbb"/><rect x="2.5" y="5" width="5" height="8" fill="#3f8a73"/><rect x="9" y="5" width="5" height="8" fill="#dfe5e3"/></svg><div class="t" style="left:37px;top:418px;font-size:11px;color:#000;letter-spacing:-0.3px;">WsxService.exe</div><div class="t" style="left:-161px;width:400px;text-align:right;top:418px;font-size:11px;color:#000;letter-spacing:-0.3px;">1.19</div><div class="t" style="left:-81px;width:400px;text-align:right;top:418px;font-size:11px;color:#000;letter-spacing:-0.3px;">2,600 K</div><div class="t" style="left:-1px;width:400px;text-align:right;top:418px;font-size:11px;color:#000;letter-spacing:-0.3px;">7,548 K</div><div class="t" style="left:39px;width:400px;text-align:right;top:418px;font-size:11px;color:#000;letter-spacing:-0.3px;">5568</div><div class="t" style="left:442px;top:418px;font-size:11px;color:#000;letter-spacing:-0.3px;"></div><div class="t" style="left:593px;top:418px;font-size:11px;color:#000;letter-spacing:-0.3px;"></div><svg class="r" style="left:19px;top:432px" width="16" height="16" viewBox="0 0 16 16"><rect x="0.5" y="1.5" width="15" height="13" fill="#e6e9e8" stroke="#9aa0a0"/><rect x="1" y="2" width="14" height="2" fill="#b5bcbb"/><rect x="2.5" y="5" width="5" height="8" fill="#3f8a73"/><rect x="9" y="5" width="5" height="8" fill="#dfe5e3"/></svg><div class="t" style="left:37px;top:434px;font-size:11px;color:#000;letter-spacing:-0.3px;">WUDFHost.exe</div><div class="t" style="left:-161px;width:400px;text-align:right;top:434px;font-size:11px;color:#000;letter-spacing:-0.3px;"></div><div class="t" style="left:-81px;width:400px;text-align:right;top:434px;font-size:11px;color:#000;letter-spacing:-0.3px;">1,992 K</div><div class="t" style="left:-1px;width:400px;text-align:right;top:434px;font-size:11px;color:#000;letter-spacing:-0.3px;">8,260 K</div><div class="t" style="left:39px;width:400px;text-align:right;top:434px;font-size:11px;color:#000;letter-spacing:-0.3px;">1860</div><div class="t" style="left:442px;top:434px;font-size:11px;color:#000;letter-spacing:-0.3px;"></div><div class="t" style="left:593px;top:434px;font-size:11px;color:#000;letter-spacing:-0.3px;"></div><div class="r" style="left:37px;top:448px;width:163px;height:16px;background:#ffd0d0;"></div><div class="r" style="left:401px;top:448px;width:330px;height:16px;background:#ffd0d0;"></div><svg class="r" style="left:19px;top:448px" width="16" height="16" viewBox="0 0 16 16"><rect x="0" y="0" width="16" height="16" rx="2" fill="#1a1a1a"/><path d="M3 3 H12 V5 L6 12 H13 V14 H3 V12 L9 5 H3 Z" fill="#fff"/><path d="M10 12 L12 9 L14 12 Z" fill="#c66"/></svg><div class="t" style="left:37px;top:450px;font-size:11px;color:#000;letter-spacing:-0.3px;">ZAARUpdateService.exe</div><div class="t" style="left:-161px;width:400px;text-align:right;top:450px;font-size:11px;color:#000;letter-spacing:-0.3px;"></div><div class="t" style="left:-81px;width:400px;text-align:right;top:450px;font-size:11px;color:#000;letter-spacing:-0.3px;">15,980 K</div><div class="t" style="left:-1px;width:400px;text-align:right;top:450px;font-size:11px;color:#000;letter-spacing:-0.3px;">26,656 K</div><div class="t" style="left:39px;width:400px;text-align:right;top:450px;font-size:11px;color:#000;letter-spacing:-0.3px;">5588</div><div class="t" style="left:442px;top:450px;font-size:11px;color:#000;letter-spacing:-0.3px;">ZAARUpdateService</div><div class="t" style="left:593px;top:450px;font-size:11px;color:#000;letter-spacing:-0.3px;">Check Point Software Tec...</div><div class="r" style="left:37px;top:464px;width:163px;height:16px;background:#ffd0d0;"></div><div class="r" style="left:401px;top:464px;width:330px;height:16px;background:#ffd0d0;"></div><svg class="r" style="left:19px;top:464px" width="16" height="16" viewBox="0 0 16 16"><rect x="0.5" y="2.5" width="15" height="11" fill="#fdfdfd" stroke="#8a8a8a"/><rect x="1" y="3" width="14" height="1.5" fill="#c8c8c8"/><rect x="3" y="6" width="4" height="6" fill="#1e6fd0"/><rect x="9" y="6" width="5" height="1" fill="#777"/><rect x="9" y="8" width="5" height="1" fill="#777"/><rect x="9" y="10" width="5" height="1" fill="#777"/></svg><div class="t" style="left:37px;top:466px;font-size:11px;color:#000;letter-spacing:-0.3px;">ZAPrivacyService.exe</div><div class="t" style="left:-161px;width:400px;text-align:right;top:466px;font-size:11px;color:#000;letter-spacing:-0.3px;">0.00</div><div class="t" style="left:-81px;width:400px;text-align:right;top:466px;font-size:11px;color:#000;letter-spacing:-0.3px;">20,004 K</div><div class="t" style="left:-1px;width:400px;text-align:right;top:466px;font-size:11px;color:#000;letter-spacing:-0.3px;">24,500 K</div><div class="t" style="left:39px;width:400px;text-align:right;top:466px;font-size:11px;color:#000;letter-spacing:-0.3px;">5644</div><div class="t" style="left:442px;top:466px;font-size:11px;color:#000;letter-spacing:-0.3px;">ZAPrivacyService</div><div class="t" style="left:593px;top:466px;font-size:11px;color:#000;letter-spacing:-0.3px;">Check Point Software Tec...</div></div><div class="r" style="left:204px;top:522px;width:1px;height:468px;background:#6a6a6a;"></div><div class="r" style="left:771px;top:498px;width:16px;height:492px;background:#f0f0f0;"></div><div class="r" style="left:772px;top:900px;width:14px;height:66px;background:#cdcdcd;"></div><svg class="r" style="left:774px;top:503px;" width="10" height="7" viewBox="0 0 10 7"><path d="M1 6 L5 2 L9 6" stroke="#606060" stroke-width="2" fill="none"/></svg><svg class="r" style="left:774px;top:978px;" width="10" height="7" viewBox="0 0 10 7"><path d="M1 1 L5 5 L9 1" stroke="#606060" stroke-width="2" fill="none"/></svg><div class="r" style="left:4px;top:990px;width:783px;height:1px;background:#6a6a6a;"></div><div class="r" style="left:5px;top:991px;width:783px;height:22px;background:#f0f0f0;"></div><div class="r" style="left:114px;top:993px;width:1px;height:19px;background:#d6d6d6;"></div><div class="r" style="left:252px;top:993px;width:1px;height:19px;background:#d6d6d6;"></div><div class="r" style="left:338px;top:993px;width:1px;height:19px;background:#d6d6d6;"></div><div class="t" style="left:7px;top:999px;font-size:11px;color:#000;">CPU Usage: 27.70%</div><div class="t" style="left:119px;top:998px;font-size:11.5px;color:#000;">Commit Charge: 40.13%</div><div class="t" style="left:257px;top:999px;font-size:11px;color:#000;">Processes: 223</div><div class="t" style="left:342px;top:999px;font-size:11px;color:#000;">Physical Usage: 40.05%</div><div class="r" style="left:788px;top:396px;width:883px;height:618px;background:#f0f0f0;border:1px solid #8a8a8a;box-sizing:border-box;box-shadow:0 0 14px rgba(0,0,0,0.28);"></div><div class="r" style="left:789px;top:397px;width:881px;height:30px;background:#fff;"></div><svg class="r" style="left:797px;top:403px;" width="16" height="14" viewBox="0 0 16 14"><path d="M0 3 L16 3 L12.5 14 L9.5 14 L8 10 L6.5 14 L3.5 14 Z" fill="#56626a"/><path d="M3 4 L5.5 12 M13 4 L10.5 12 M7 4 L8 8 L9 4" stroke="#a4b0b8" stroke-width="1" fill="none"/><path d="M6 3 Q8 0 10 3" stroke="#6a767e" stroke-width="1.5" fill="none"/></svg><div class="t" style="left:818px;top:407px;font-size:12px;color:#999;letter-spacing:-0.3px;">WorkShelf.exe:8808 Properties</div><div class="r" style="left:1553px;top:411px;width:10px;height:1px;background:#777;"></div><div class="r" style="left:1597px;top:406px;width:10px;height:10px;border:1px solid #777;box-sizing:border-box;"></div><svg class="r" style="left:1643px;top:406px;" width="11" height="11" viewBox="0 0 11 11"><path d="M0.5 0.5 L10.5 10.5 M10.5 0.5 L0.5 10.5" stroke="#777" stroke-width="1"/></svg><div class="r" style="left:798px;top:453px;width:859px;height:523px;background:#fff;border:1px solid #d9d9d9;box-sizing:border-box;"></div><div class="r" style="left:800px;top:434px;width:42px;height:19px;background:#f0f0f0;border:1px solid #d9d9d9;box-sizing:border-box;"></div><div class="t" style="left:806px;top:439px;font-size:11px;color:#000;letter-spacing:-0.1px;">Image</div><div class="r" style="left:841px;top:434px;width:74px;height:19px;background:#f0f0f0;border:1px solid #d9d9d9;box-sizing:border-box;"></div><div class="t" style="left:847px;top:439px;font-size:11px;color:#000;letter-spacing:-0.1px;">Performance</div><div class="r" style="left:914px;top:434px;width:106px;height:19px;background:#f0f0f0;border:1px solid #d9d9d9;box-sizing:border-box;"></div><div class="t" style="left:920px;top:439px;font-size:11px;color:#000;letter-spacing:-0.1px;">Performance Graph</div><div class="r" style="left:1019px;top:434px;width:64px;height:19px;background:#f0f0f0;border:1px solid #d9d9d9;box-sizing:border-box;"></div><div class="t" style="left:1026px;top:439px;font-size:11px;color:#000;letter-spacing:-0.1px;">GPU Graph</div><div class="r" style="left:1136px;top:434px;width:44px;height:19px;background:#f0f0f0;border:1px solid #d9d9d9;box-sizing:border-box;"></div><div class="t" style="left:1141px;top:439px;font-size:11px;color:#000;letter-spacing:-0.1px;">TCP/IP</div><div class="r" style="left:1179px;top:434px;width:52px;height:19px;background:#f0f0f0;border:1px solid #d9d9d9;box-sizing:border-box;"></div><div class="t" style="left:1186px;top:439px;font-size:11px;color:#000;letter-spacing:-0.1px;">Security</div><div class="r" style="left:1230px;top:434px;width:73px;height:19px;background:#f0f0f0;border:1px solid #d9d9d9;box-sizing:border-box;"></div><div class="t" style="left:1237px;top:439px;font-size:11px;color:#000;letter-spacing:-0.1px;">Environment</div><div class="r" style="left:1302px;top:434px;width:44px;height:19px;background:#f0f0f0;border:1px solid #d9d9d9;box-sizing:border-box;"></div><div class="t" style="left:1308px;top:439px;font-size:11px;color:#000;letter-spacing:-0.1px;">Job</div><div class="r" style="left:1345px;top:434px;width:44px;height:19px;background:#f0f0f0;border:1px solid #d9d9d9;box-sizing:border-box;"></div><div class="t" style="left:1351px;top:439px;font-size:11px;color:#000;letter-spacing:-0.1px;">Strings</div><div class="r" style="left:1083px;top:432px;width:54px;height:22px;background:#fff;border:1px solid #d9d9d9;box-sizing:border-box;border-bottom:none;"></div><div class="t" style="left:1090px;top:437px;font-size:11px;color:#000;letter-spacing:-0.1px;">Threads</div><div class="t" style="left:815px;top:460px;font-size:11.5px;color:#000;letter-spacing:-0.2px;">Count:</div><div class="t" style="left:858px;top:460px;font-size:11.5px;color:#000;">8</div><div class="r" style="left:813px;top:477px;width:831px;height:315px;background:#fff;border:1px solid #828790;box-sizing:border-box;"></div><div class="r" style="left:864px;top:479px;width:1px;height:23px;background:#eaeaea;"></div><div class="r" style="left:914px;top:479px;width:1px;height:23px;background:#eaeaea;"></div><div class="r" style="left:1039px;top:479px;width:1px;height:23px;background:#eaeaea;"></div><div class="r" style="left:1139px;top:479px;width:1px;height:23px;background:#eaeaea;"></div><div class="r" style="left:1548px;top:479px;width:1px;height:23px;background:#eaeaea;"></div><svg class="r" style="left:886px;top:478px;" width="9" height="5" viewBox="0 0 9 5"><path d="M0.5 0.5 L4.5 4.5 L8.5 0.5" stroke="#777" fill="none"/></svg><div class="t" style="left:457px;width:400px;text-align:right;top:485px;font-size:11.5px;color:#000;letter-spacing:-0.2px;">TID</div><div class="t" style="left:886px;top:485px;font-size:11.5px;color:#000;letter-spacing:-0.2px;">CPU</div><div class="t" style="left:633px;width:400px;text-align:right;top:485px;font-size:11.5px;color:#000;letter-spacing:-0.2px;">Cycles Delta</div><div class="t" style="left:733px;width:400px;text-align:right;top:485px;font-size:11.5px;color:#000;letter-spacing:-0.2px;">Suspend Count</div><div class="t" style="left:1146px;top:485px;font-size:11.5px;color:#000;letter-spacing:-0.2px;">Start Address</div><div class="r" style="left:815px;top:503px;width:734px;height:15px;background:#b4b4b4;"></div><div class="t" style="left:455px;width:400px;text-align:right;top:505px;font-size:11.5px;color:#000;letter-spacing:-0.3px;">8812</div><div class="t" style="left:884px;top:505px;font-size:11.5px;color:#000;letter-spacing:-0.3px;">0.75</div><div class="t" style="left:630px;width:400px;text-align:right;top:505px;font-size:11.5px;color:#000;letter-spacing:-0.3px;">257,107,930</div><div class="t" style="left:1141px;top:505px;font-size:11.5px;color:#000;letter-spacing:-0.3px;">workshelf.exe+0x6cb4c</div><div class="t" style="left:455px;width:400px;text-align:right;top:520px;font-size:11.5px;color:#000;letter-spacing:-0.3px;">11548</div><div class="t" style="left:884px;top:520px;font-size:11.5px;color:#000;letter-spacing:-0.3px;">0.47</div><div class="t" style="left:630px;width:400px;text-align:right;top:520px;font-size:11.5px;color:#000;letter-spacing:-0.3px;">161,888,998</div><div class="t" style="left:1141px;top:520px;font-size:11.5px;color:#000;letter-spacing:-0.3px;">winmm.dll!PlaySoundW+0x640</div><div class="t" style="left:455px;width:400px;text-align:right;top:535px;font-size:11.5px;color:#000;letter-spacing:-0.3px;">14256</div><div class="t" style="left:884px;top:535px;font-size:11.5px;color:#000;letter-spacing:-0.3px;">0.03</div><div class="t" style="left:630px;width:400px;text-align:right;top:535px;font-size:11.5px;color:#000;letter-spacing:-0.3px;">9,697,614</div><div class="t" style="left:1141px;top:535px;font-size:11.5px;color:#000;letter-spacing:-0.3px;">shcore.dll!Ordinal187+0xac0</div><div class="t" style="left:455px;width:400px;text-align:right;top:550px;font-size:11.5px;color:#000;letter-spacing:-0.3px;">4412</div><div class="t" style="left:884px;top:550px;font-size:11.5px;color:#000;letter-spacing:-0.3px;"></div><div class="t" style="left:630px;width:400px;text-align:right;top:550px;font-size:11.5px;color:#000;letter-spacing:-0.3px;"></div><div class="t" style="left:1141px;top:550px;font-size:11.5px;color:#000;letter-spacing:-0.3px;">ntdll.dll!TpCallbackIndependent+0xe30</div><div class="t" style="left:455px;width:400px;text-align:right;top:565px;font-size:11.5px;color:#000;letter-spacing:-0.3px;">7160</div><div class="t" style="left:884px;top:565px;font-size:11.5px;color:#000;letter-spacing:-0.3px;"></div><div class="t" style="left:630px;width:400px;text-align:right;top:565px;font-size:11.5px;color:#000;letter-spacing:-0.3px;"></div><div class="t" style="left:1141px;top:565px;font-size:11.5px;color:#000;letter-spacing:-0.3px;">combase.dll!RoInitialize+0x220</div><div class="t" style="left:455px;width:400px;text-align:right;top:580px;font-size:11.5px;color:#000;letter-spacing:-0.3px;">11120</div><div class="t" style="left:884px;top:580px;font-size:11.5px;color:#000;letter-spacing:-0.3px;"></div><div class="t" style="left:630px;width:400px;text-align:right;top:580px;font-size:11.5px;color:#000;letter-spacing:-0.3px;"></div><div class="t" style="left:1141px;top:580px;font-size:11.5px;color:#000;letter-spacing:-0.3px;">ntdll.dll!TpCallbackIndependent+0xe30</div><div class="t" style="left:455px;width:400px;text-align:right;top:595px;font-size:11.5px;color:#000;letter-spacing:-0.3px;">8652</div><div class="t" style="left:884px;top:595px;font-size:11.5px;color:#000;letter-spacing:-0.3px;"></div><div class="t" style="left:630px;width:400px;text-align:right;top:595px;font-size:11.5px;color:#000;letter-spacing:-0.3px;"></div><div class="t" style="left:1141px;top:595px;font-size:11.5px;color:#000;letter-spacing:-0.3px;">gdiplus.DLL!GdiplusStartup+0x19b0</div><div class="t" style="left:455px;width:400px;text-align:right;top:610px;font-size:11.5px;color:#000;letter-spacing:-0.3px;">7328</div><div class="t" style="left:884px;top:610px;font-size:11.5px;color:#000;letter-spacing:-0.3px;"></div><div class="t" style="left:630px;width:400px;text-align:right;top:610px;font-size:11.5px;color:#000;letter-spacing:-0.3px;"></div><div class="t" style="left:1141px;top:610px;font-size:11.5px;color:#000;letter-spacing:-0.3px;">WS2_32.dll!getnameinfo+0x7d0</div><div class="t" style="left:812px;top:805px;font-size:11px;color:#000;">Thread ID:</div><div class="t" style="left:917px;top:805px;font-size:11px;color:#000;">8812</div><div class="t" style="left:812px;top:824px;font-size:11px;color:#000;">Start Time:</div><div class="t" style="left:917px;top:824px;font-size:11px;color:#000;">17:55:08   7/26/2019</div><div class="t" style="left:812px;top:843px;font-size:11px;color:#000;">State:</div><div class="t" style="left:917px;top:843px;font-size:11px;color:#000;">Wait:WrLpcReply</div><div class="t" style="left:1031px;top:843px;font-size:11px;color:#000;">Base Priority:</div><div class="t" style="left:1130px;top:843px;font-size:11px;color:#000;">8</div><div class="t" style="left:812px;top:863px;font-size:11px;color:#000;">Kernel Time:</div><div class="t" style="left:917px;top:863px;font-size:11px;color:#000;">0:01:24.687</div><div class="t" style="left:1031px;top:863px;font-size:11px;color:#000;">Dynamic Priority:</div><div class="t" style="left:1130px;top:863px;font-size:11px;color:#000;">8</div><div class="t" style="left:812px;top:882px;font-size:11px;color:#000;">User Time:</div><div class="t" style="left:917px;top:882px;font-size:11px;color:#000;">0:01:07.468</div><div class="t" style="left:1031px;top:882px;font-size:11px;color:#000;">I/O Priority:</div><div class="t" style="left:1130px;top:882px;font-size:11px;color:#000;">Normal</div><div class="t" style="left:812px;top:901px;font-size:11px;color:#000;">Context Switches:</div><div class="t" style="left:917px;top:901px;font-size:11px;color:#000;">4,497,590</div><div class="t" style="left:1031px;top:901px;font-size:11px;color:#000;">Memory Priority:</div><div class="t" style="left:1130px;top:901px;font-size:11px;color:#000;">5</div><div class="t" style="left:812px;top:922px;font-size:11px;color:#000;">Cycles:</div><div class="t" style="left:917px;top:922px;font-size:11px;color:#000;">998,241,752,775</div><div class="t" style="left:1031px;top:922px;font-size:11px;color:#000;">Ideal Processor:</div><div class="t" style="left:1130px;top:922px;font-size:11px;color:#000;">7</div><div class="r" style="left:1490px;top:798px;width:73px;height:21px;background:#e1e1e1;border:1px solid #adadad;box-sizing:border-box;"></div><div class="t" style="left:1490.0px;width:73px;text-align:center;top:804px;font-size:11.5px;color:#000;">Stack</div><div class="r" style="left:1569px;top:798px;width:73px;height:21px;background:#e1e1e1;border:1px solid #adadad;box-sizing:border-box;"></div><div class="t" style="left:1569.0px;width:73px;text-align:center;top:804px;font-size:11.5px;color:#000;">Module</div><div class="r" style="left:1407px;top:946px;width:73px;height:21px;background:#e1e1e1;border:1px solid #adadad;box-sizing:border-box;"></div><div class="t" style="left:1407.0px;width:73px;text-align:center;top:952px;font-size:11.5px;color:#000;">Permissions</div><div class="r" style="left:1490px;top:946px;width:73px;height:21px;background:#e1e1e1;border:1px solid #adadad;box-sizing:border-box;"></div><div class="t" style="left:1490.0px;width:73px;text-align:center;top:952px;font-size:11.5px;color:#000;">Kill</div><div class="r" style="left:1569px;top:946px;width:73px;height:21px;background:#e1e1e1;border:1px solid #adadad;box-sizing:border-box;"></div><div class="t" style="left:1569.0px;width:73px;text-align:center;top:952px;font-size:11.5px;color:#000;">Suspend</div><div class="r" style="left:1496px;top:989px;width:73px;height:21px;background:#e1e1e1;border:1px solid #adadad;box-sizing:border-box;"></div><div class="t" style="left:1496.0px;width:73px;text-align:center;top:995px;font-size:11.5px;color:#000;">OK</div><div class="r" style="left:1583px;top:989px;width:73px;height:21px;background:#e1e1e1;border:1px solid #adadad;box-sizing:border-box;"></div><div class="t" style="left:1583.0px;width:73px;text-align:center;top:995px;font-size:11.5px;color:#000;">Cancel</div>
</body></html>
